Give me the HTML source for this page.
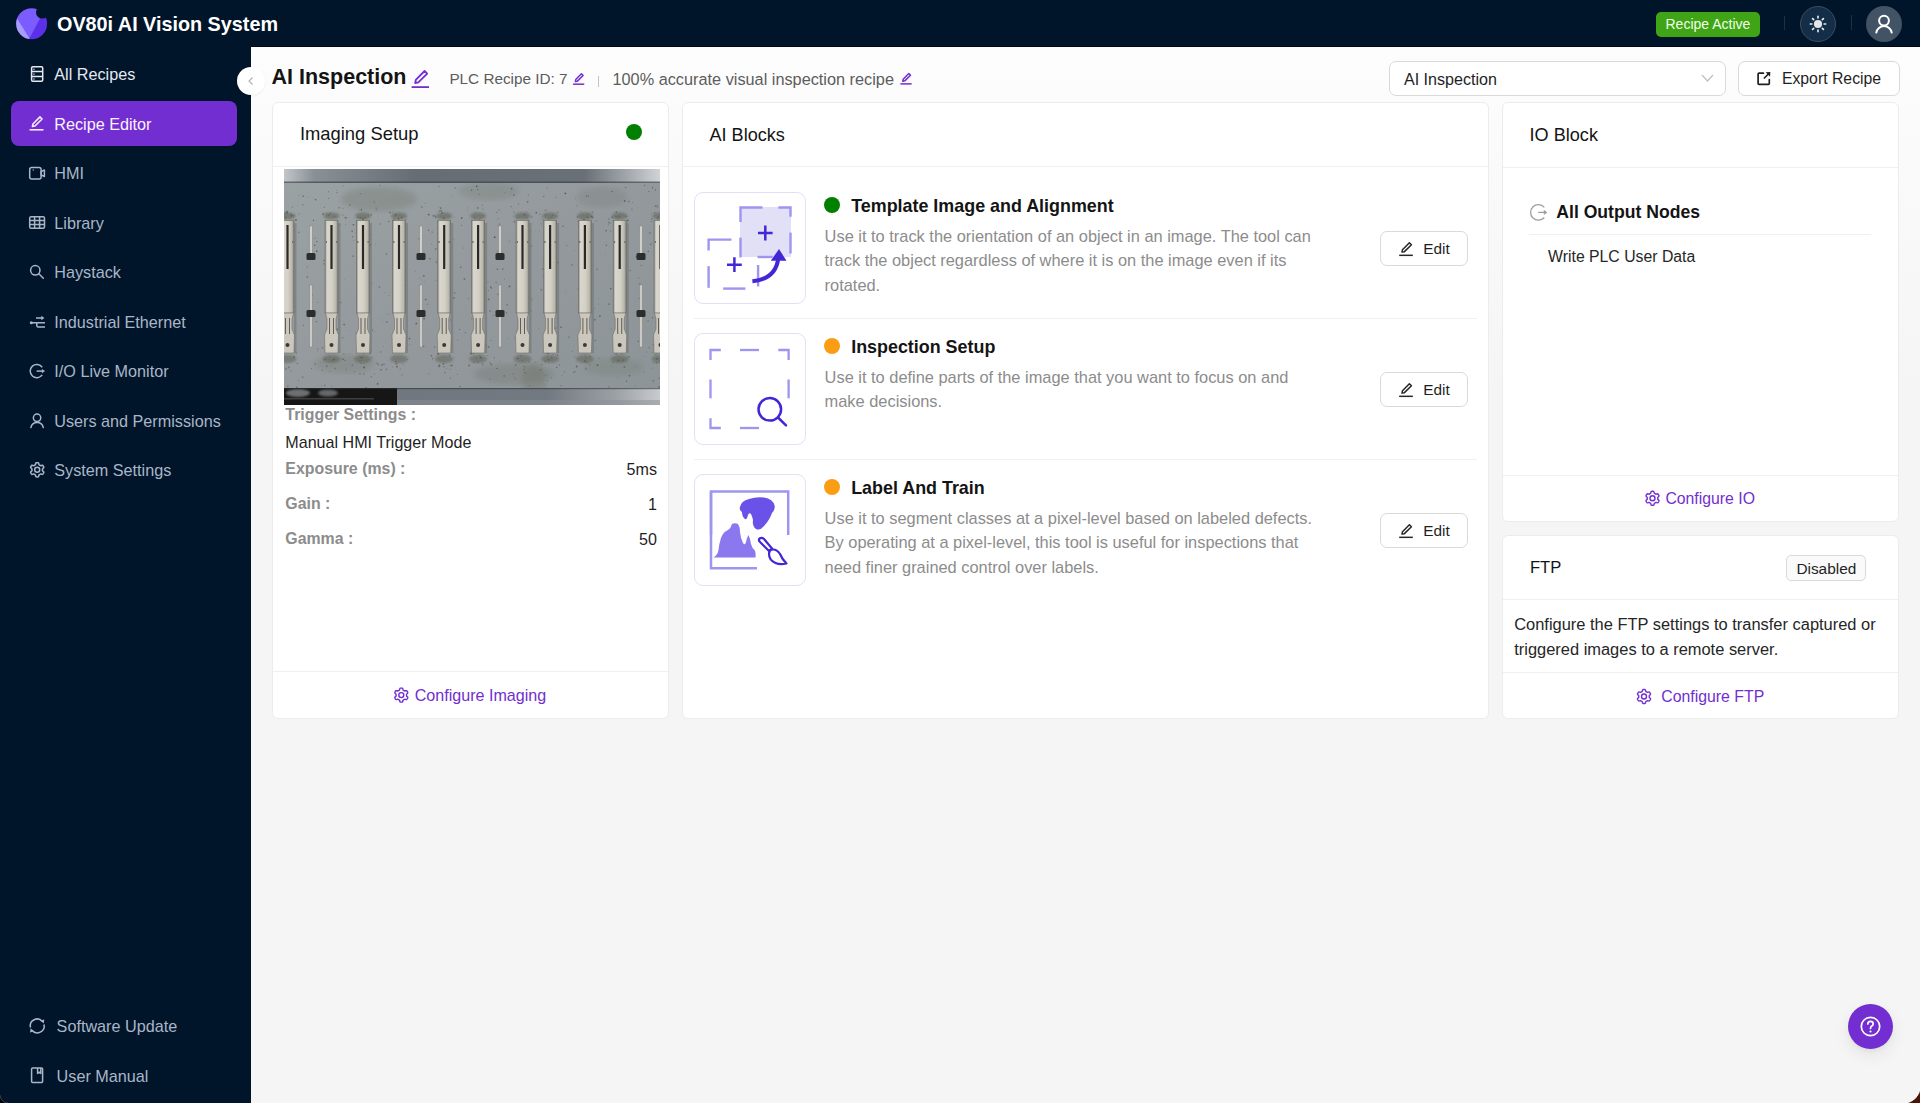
<!DOCTYPE html>
<html><head><meta charset="utf-8"><title>OV80i AI Vision System</title>
<style>
html,body{margin:0;padding:0;width:1920px;height:1103px;overflow:hidden;background:#f5f5f5;font-family:"Liberation Sans",sans-serif;}
.t{position:absolute;line-height:1;white-space:nowrap;}
svg{overflow:visible}
</style></head><body>
<div style="position:absolute;left:0px;top:0px;width:1920px;height:47px;background:#001529"></div>
<svg style="position:absolute;left:0;top:0" width="60" height="47" viewBox="0 0 60 47">
<defs><mask id="lm"><rect x="0" y="0" width="60" height="47" fill="#fff"/><circle cx="42.3" cy="12.3" r="6.3" fill="#000"/></mask>
<clipPath id="lc"><circle cx="31.6" cy="23.7" r="15.5"/></clipPath></defs>
<g clip-path="url(#lc)" mask="url(#lm)"><rect x="0" y="0" width="60" height="47" fill="#7a5cff"/>
<path d="M0 0 L5.7 0 L34.75 47 L0 47Z" fill="#a99cff"/>
<path d="M49.7 0 L60 0 L60 47 L25 47Z" fill="#5b30e8"/></g></svg>
<div class="t" style="left:57.0px;top:14.9px;font-size:19.8px;color:#ffffff;font-weight:700;">OV80i AI Vision System</div>
<div style="position:absolute;left:1656px;top:12px;width:104px;height:25px;background:#3fa516;border-radius:5px"></div>
<div class="t" style="left:1665.5px;top:17.4px;font-size:14px;color:#f0ffe8;font-weight:400;">Recipe Active</div>
<div style="position:absolute;left:1784px;top:16px;width:1px;height:14px;background:#1f3046"></div>
<div style="position:absolute;left:1851px;top:15px;width:1px;height:15px;background:#1f3046"></div>
<div style="position:absolute;left:1800px;top:6px;width:36px;height:36px;background:#142e48;border:1px solid #3e4d5e;border-radius:50%;box-sizing:border-box"></div>
<svg style="position:absolute;left:1807.7px;top:13.7px" width="20" height="20" viewBox="0 0 20 20">
<circle cx="10" cy="10" r="4.1" fill="#e4e6ea"/>
<g stroke="#e4eef5" stroke-width="1.6" stroke-linecap="round"><line x1="10.00" y1="3.90" x2="10.00" y2="2.30"/><line x1="14.31" y1="5.69" x2="15.44" y2="4.56"/><line x1="16.10" y1="10.00" x2="17.70" y2="10.00"/><line x1="14.31" y1="14.31" x2="15.44" y2="15.44"/><line x1="10.00" y1="16.10" x2="10.00" y2="17.70"/><line x1="5.69" y1="14.31" x2="4.56" y2="15.44"/><line x1="3.90" y1="10.00" x2="2.30" y2="10.00"/><line x1="5.69" y1="5.69" x2="4.56" y2="4.56"/></g></svg>
<div style="position:absolute;left:1866px;top:6px;width:36px;height:36px;background:#435366;border-radius:50%"></div>
<svg style="position:absolute;left:1872px;top:12px" width="24" height="24" viewBox="0 0 24 24">
<g fill="none" stroke="#ffffff" stroke-width="2" stroke-linecap="round">
<circle cx="12" cy="8.6" r="4.9"/><path d="M4.3 20.6 A7.8 7.8 0 0 1 19.7 20.6"/></g></svg>
<div style="position:absolute;left:0px;top:47px;width:251px;height:1056px;background:#001529"></div>
<div style="position:absolute;left:11px;top:101px;width:226px;height:45px;background:#722ed1;border-radius:8px"></div>
<div class="t" style="left:54.3px;top:66.3px;font-size:16.2px;color:#e4e9f2;font-weight:400;">All Recipes</div>
<div class="t" style="left:54.3px;top:115.8px;font-size:16.2px;color:#fbf3ff;font-weight:400;">Recipe Editor</div>
<div class="t" style="left:54.3px;top:165.3px;font-size:16.2px;color:#aab6c8;font-weight:400;">HMI</div>
<div class="t" style="left:54.3px;top:214.8px;font-size:16.2px;color:#aab6c8;font-weight:400;">Library</div>
<div class="t" style="left:54.3px;top:264.3px;font-size:16.2px;color:#aab6c8;font-weight:400;">Haystack</div>
<div class="t" style="left:54.3px;top:313.5px;font-size:16.2px;color:#aab6c8;font-weight:400;">Industrial Ethernet</div>
<div class="t" style="left:54.3px;top:363.0px;font-size:16.2px;color:#aab6c8;font-weight:400;">I/O Live Monitor</div>
<div class="t" style="left:54.3px;top:412.6px;font-size:16.2px;color:#aab6c8;font-weight:400;">Users and Permissions</div>
<div class="t" style="left:54.3px;top:462.0px;font-size:16.2px;color:#aab6c8;font-weight:400;">System Settings</div>
<div class="t" style="left:56.6px;top:1018.3px;font-size:16.2px;color:#aab6c8;font-weight:400;">Software Update</div>
<div class="t" style="left:56.6px;top:1067.9px;font-size:16.2px;color:#aab6c8;font-weight:400;">User Manual</div>
<div style="position:absolute;left:251px;top:47px;width:1669px;height:1056px;background:linear-gradient(#fdfdfd 0px,#fbfbfb 70px,#f5f5f5 340px,#f5f5f5 1056px)"></div>
<div style="position:absolute;left:251px;top:46px;width:1669px;height:1px;background:#000514"></div>
<div style="position:absolute;left:237px;top:67px;width:28px;height:28px;background:#ffffff;border-radius:50%;box-shadow:0 1px 3px rgba(0,0,0,0.06)"></div>
<svg style="position:absolute;left:246px;top:76px" width="10" height="10" viewBox="0 0 10 10"><path d="M6.5 1.5 L3 5 L6.5 8.5" fill="none" stroke="#b0b0b0" stroke-width="1.1"/></svg>
<div class="t" style="left:271.5px;top:66.5px;font-size:21.5px;color:#141414;font-weight:700;">AI Inspection</div>
<div class="t" style="left:449.4px;top:71.4px;font-size:15.3px;color:#5c5c5c;font-weight:400;">PLC Recipe ID: 7</div>
<div style="position:absolute;left:598px;top:76px;width:1.3px;height:11px;background:#c4c4c4"></div>
<div class="t" style="left:612.5px;top:70.6px;font-size:16.3px;color:#5c5c5c;font-weight:400;">100% accurate visual inspection recipe</div>
<div style="position:absolute;left:1389px;top:61px;width:337px;height:35px;background:#fff;border:1px solid #d9d9d9;border-radius:7px;box-sizing:border-box"></div>
<div class="t" style="left:1403.9px;top:70.9px;font-size:16.1px;color:#1f1f1f;font-weight:400;">AI Inspection</div>
<svg style="position:absolute;left:1701px;top:73px" width="13" height="10" viewBox="0 0 13 10"><path d="M1 2 L6.5 8 L12 2" fill="none" stroke="#bfbfbf" stroke-width="1.2"/></svg>
<div style="position:absolute;left:1738px;top:61px;width:162px;height:35px;background:#fff;border:1px solid #d9d9d9;border-radius:7px;box-sizing:border-box"></div>
<svg style="position:absolute;left:0;top:0" width="1920" height="120" viewBox="0 0 1920 120"><g fill="none" stroke="#1f1f1f" stroke-width="1.7" stroke-linecap="round"><path d="M1763.4 73.2 H1759 Q1758.1 73.2 1758.1 74.1 V83.4 Q1758.1 84.3 1759 84.3 H1768.4 Q1769.3 84.3 1769.3 83.4 V79.6"/><path d="M1764.4 78 L1768.4 74"/></g><path d="M1765.6 72.3 L1770.3 72.1 L1770.1 76.8 Z" fill="#1f1f1f"/></svg>
<div class="t" style="left:1781.9px;top:71.4px;font-size:15.8px;color:#1f1f1f;font-weight:400;">Export Recipe</div>
<div style="position:absolute;left:272px;top:102px;width:397px;height:617px;background:#fff;border:1px solid #ececec;border-radius:6px;box-sizing:border-box"></div>
<div class="t" style="left:299.9px;top:125.2px;font-size:18.4px;color:#141414;font-weight:400;">Imaging Setup</div>
<div style="position:absolute;left:626px;top:124px;width:16px;height:16px;background:#008000;border-radius:50%"></div>
<div style="position:absolute;left:273px;top:166px;width:395px;height:1px;background:#f0f0f0"></div>
<svg style="position:absolute;left:284px;top:169px;overflow:hidden" width="376" height="236" viewBox="0 0 376 236"><defs><linearGradient id="rail" x1="0" x2="1" y1="0" y2="0"><stop offset="0" stop-color="#c2c6ca"/><stop offset="0.08" stop-color="#8a9096"/><stop offset="0.35" stop-color="#676d74"/><stop offset="0.8" stop-color="#6a7077"/><stop offset="0.9" stop-color="#9ca1a6"/><stop offset="1" stop-color="#d0d3d6"/></linearGradient><linearGradient id="plate" x1="0" x2="1" y1="0" y2="1"><stop offset="0" stop-color="#9ba2a4"/><stop offset="0.5" stop-color="#93999c"/><stop offset="1" stop-color="#8d9497"/></linearGradient><linearGradient id="brail" x1="0" x2="1" y1="0" y2="0"><stop offset="0" stop-color="#70767d"/><stop offset="0.7" stop-color="#737980"/><stop offset="0.88" stop-color="#9ba0a5"/><stop offset="1" stop-color="#c8cbce"/></linearGradient><linearGradient id="term" x1="0" x2="1" y1="0" y2="0"><stop offset="0" stop-color="#85837b"/><stop offset="0.15" stop-color="#d9d6cd"/><stop offset="0.55" stop-color="#d3d0c6"/><stop offset="0.85" stop-color="#bab7ad"/><stop offset="1" stop-color="#7a786f"/></linearGradient><filter id="blur1"><feGaussianBlur stdDeviation="2.5"/></filter><filter id="blur2"><feGaussianBlur stdDeviation="1.2"/></filter></defs><rect x="0" y="0" width="376" height="236" fill="url(#plate)"/><ellipse cx="95" cy="30" rx="38" ry="12" fill="#5e6252" opacity="0.22" filter="url(#blur1)"/><ellipse cx="205" cy="22" rx="30" ry="9" fill="#5e6252" opacity="0.18" filter="url(#blur1)"/><ellipse cx="318" cy="28" rx="25" ry="10" fill="#5e6252" opacity="0.15" filter="url(#blur1)"/><ellipse cx="60" cy="195" rx="30" ry="9" fill="#5e6252" opacity="0.18" filter="url(#blur1)"/><ellipse cx="230" cy="205" rx="40" ry="10" fill="#5e6252" opacity="0.2" filter="url(#blur1)"/><ellipse cx="330" cy="198" rx="30" ry="9" fill="#5e6252" opacity="0.15" filter="url(#blur1)"/><ellipse cx="250" cy="212" rx="12" ry="18" fill="#5e6252" opacity="0.22" filter="url(#blur1)"/><circle cx="170.1" cy="128.8" r="0.86" fill="#3a3e38" opacity="0.49"/><circle cx="190.9" cy="134.4" r="0.45" fill="#3a3e38" opacity="0.50"/><circle cx="236.8" cy="176.6" r="0.40" fill="#3a3e38" opacity="0.42"/><circle cx="34.1" cy="180.0" r="0.73" fill="#3a3e38" opacity="0.32"/><circle cx="369.3" cy="211.8" r="0.71" fill="#3a3e38" opacity="0.55"/><circle cx="59.2" cy="17.1" r="0.64" fill="#3a3e38" opacity="0.32"/><circle cx="71.5" cy="63.6" r="0.37" fill="#3a3e38" opacity="0.49"/><circle cx="165.6" cy="186.7" r="0.64" fill="#3a3e38" opacity="0.56"/><circle cx="187.9" cy="149.8" r="0.60" fill="#3a3e38" opacity="0.41"/><circle cx="375.1" cy="218.1" r="0.81" fill="#3a3e38" opacity="0.58"/><circle cx="118.5" cy="61.1" r="0.51" fill="#3a3e38" opacity="0.33"/><circle cx="288.1" cy="96.1" r="0.82" fill="#3a3e38" opacity="0.45"/><circle cx="360.2" cy="187.7" r="0.35" fill="#3a3e38" opacity="0.38"/><circle cx="342.3" cy="110.3" r="0.89" fill="#3a3e38" opacity="0.46"/><circle cx="27.5" cy="143.0" r="0.78" fill="#3a3e38" opacity="0.41"/><circle cx="32.8" cy="82.2" r="0.88" fill="#3a3e38" opacity="0.60"/><circle cx="44.4" cy="64.5" r="0.41" fill="#3a3e38" opacity="0.32"/><circle cx="299.7" cy="50.4" r="0.66" fill="#3a3e38" opacity="0.48"/><circle cx="71.7" cy="164.0" r="0.42" fill="#3a3e38" opacity="0.56"/><circle cx="43.8" cy="100.3" r="0.47" fill="#3a3e38" opacity="0.41"/><circle cx="365.1" cy="178.7" r="0.52" fill="#3a3e38" opacity="0.65"/><circle cx="79.2" cy="94.8" r="0.82" fill="#3a3e38" opacity="0.56"/><circle cx="37.7" cy="216.8" r="0.47" fill="#3a3e38" opacity="0.40"/><circle cx="290.5" cy="81.4" r="0.51" fill="#3a3e38" opacity="0.33"/><circle cx="33.9" cy="133.5" r="0.48" fill="#3a3e38" opacity="0.54"/><circle cx="139.8" cy="106.9" r="0.88" fill="#3a3e38" opacity="0.49"/><circle cx="216.0" cy="191.6" r="0.45" fill="#3a3e38" opacity="0.36"/><circle cx="341.6" cy="181.6" r="0.49" fill="#3a3e38" opacity="0.38"/><circle cx="278.0" cy="206.8" r="0.46" fill="#3a3e38" opacity="0.68"/><circle cx="331.7" cy="137.7" r="0.58" fill="#3a3e38" opacity="0.34"/><circle cx="14.5" cy="211.3" r="0.48" fill="#3a3e38" opacity="0.58"/><circle cx="96.6" cy="182.9" r="0.68" fill="#3a3e38" opacity="0.42"/><circle cx="66.0" cy="161.7" r="0.39" fill="#3a3e38" opacity="0.39"/><circle cx="210.3" cy="188.7" r="0.69" fill="#3a3e38" opacity="0.41"/><circle cx="344.9" cy="55.8" r="0.36" fill="#3a3e38" opacity="0.41"/><circle cx="167.6" cy="26.4" r="0.45" fill="#3a3e38" opacity="0.45"/><circle cx="215.1" cy="41.0" r="0.55" fill="#3a3e38" opacity="0.66"/><circle cx="368.7" cy="148.7" r="0.73" fill="#3a3e38" opacity="0.53"/><circle cx="52.8" cy="21.2" r="0.36" fill="#3a3e38" opacity="0.66"/><circle cx="263.6" cy="211.4" r="0.36" fill="#3a3e38" opacity="0.55"/><circle cx="181.3" cy="163.8" r="0.53" fill="#3a3e38" opacity="0.70"/><circle cx="28.3" cy="125.9" r="0.76" fill="#3a3e38" opacity="0.66"/><circle cx="277.1" cy="158.3" r="0.79" fill="#3a3e38" opacity="0.67"/><circle cx="132.3" cy="154.5" r="0.85" fill="#3a3e38" opacity="0.65"/><circle cx="156.8" cy="176.1" r="0.82" fill="#3a3e38" opacity="0.53"/><circle cx="235.0" cy="92.4" r="0.67" fill="#3a3e38" opacity="0.54"/><circle cx="30.2" cy="145.1" r="0.90" fill="#3a3e38" opacity="0.65"/><circle cx="273.8" cy="93.6" r="0.75" fill="#3a3e38" opacity="0.53"/><circle cx="165.6" cy="185.9" r="0.40" fill="#3a3e38" opacity="0.60"/><circle cx="11.2" cy="137.3" r="0.61" fill="#3a3e38" opacity="0.39"/><circle cx="262.6" cy="115.9" r="0.69" fill="#3a3e38" opacity="0.67"/><circle cx="96.2" cy="16.3" r="0.52" fill="#3a3e38" opacity="0.57"/><circle cx="76.2" cy="48.8" r="0.85" fill="#3a3e38" opacity="0.56"/><circle cx="166.2" cy="196.8" r="0.53" fill="#3a3e38" opacity="0.57"/><circle cx="74.6" cy="102.3" r="0.79" fill="#3a3e38" opacity="0.67"/><circle cx="331.0" cy="92.8" r="0.67" fill="#3a3e38" opacity="0.43"/><circle cx="51.2" cy="115.8" r="0.81" fill="#3a3e38" opacity="0.64"/><circle cx="267.4" cy="208.8" r="0.50" fill="#3a3e38" opacity="0.37"/><circle cx="169.4" cy="70.4" r="0.47" fill="#3a3e38" opacity="0.47"/><circle cx="235.3" cy="115.2" r="0.52" fill="#3a3e38" opacity="0.64"/><circle cx="369.2" cy="106.8" r="0.39" fill="#3a3e38" opacity="0.31"/><circle cx="328.2" cy="22.5" r="0.74" fill="#3a3e38" opacity="0.53"/><circle cx="116.2" cy="176.3" r="0.36" fill="#3a3e38" opacity="0.35"/><circle cx="171.0" cy="19.1" r="0.81" fill="#3a3e38" opacity="0.39"/><circle cx="53.0" cy="23.6" r="0.70" fill="#3a3e38" opacity="0.48"/><circle cx="236.9" cy="148.3" r="0.79" fill="#3a3e38" opacity="0.68"/><circle cx="257.4" cy="54.9" r="0.61" fill="#3a3e38" opacity="0.37"/><circle cx="4.0" cy="110.8" r="0.74" fill="#3a3e38" opacity="0.37"/><circle cx="102.4" cy="84.9" r="0.73" fill="#3a3e38" opacity="0.51"/><circle cx="231.0" cy="169.0" r="0.57" fill="#3a3e38" opacity="0.62"/><circle cx="340.7" cy="31.9" r="0.86" fill="#3a3e38" opacity="0.59"/><circle cx="48.8" cy="107.0" r="0.69" fill="#3a3e38" opacity="0.66"/><circle cx="141.7" cy="130.6" r="0.83" fill="#3a3e38" opacity="0.62"/><circle cx="355.0" cy="109.1" r="0.71" fill="#3a3e38" opacity="0.38"/><circle cx="271.4" cy="181.8" r="0.70" fill="#3a3e38" opacity="0.59"/><circle cx="80.2" cy="198.5" r="0.89" fill="#3a3e38" opacity="0.69"/><circle cx="201.9" cy="176.1" r="0.53" fill="#3a3e38" opacity="0.66"/><circle cx="321.8" cy="85.4" r="0.40" fill="#3a3e38" opacity="0.48"/><circle cx="206.9" cy="171.5" r="0.62" fill="#3a3e38" opacity="0.31"/><circle cx="304.2" cy="27.1" r="0.79" fill="#3a3e38" opacity="0.37"/><circle cx="126.0" cy="175.5" r="0.43" fill="#3a3e38" opacity="0.36"/><circle cx="194.2" cy="162.3" r="0.81" fill="#3a3e38" opacity="0.58"/><circle cx="355.6" cy="115.0" r="0.87" fill="#3a3e38" opacity="0.33"/><circle cx="83.3" cy="122.0" r="0.51" fill="#3a3e38" opacity="0.59"/><circle cx="240.2" cy="121.2" r="0.81" fill="#3a3e38" opacity="0.52"/><circle cx="117.2" cy="92.1" r="0.81" fill="#3a3e38" opacity="0.66"/><circle cx="78.3" cy="188.4" r="0.88" fill="#3a3e38" opacity="0.51"/><circle cx="215.4" cy="55.2" r="0.64" fill="#3a3e38" opacity="0.50"/><circle cx="227.6" cy="19.7" r="0.88" fill="#3a3e38" opacity="0.51"/><circle cx="150.6" cy="178.2" r="0.66" fill="#3a3e38" opacity="0.50"/><circle cx="259.8" cy="27.5" r="0.65" fill="#3a3e38" opacity="0.47"/><circle cx="359.8" cy="203.3" r="0.50" fill="#3a3e38" opacity="0.49"/><circle cx="47.7" cy="102.9" r="0.80" fill="#3a3e38" opacity="0.66"/><circle cx="179.2" cy="79.0" r="0.46" fill="#3a3e38" opacity="0.55"/><circle cx="347.9" cy="40.5" r="0.78" fill="#3a3e38" opacity="0.31"/><circle cx="73.0" cy="60.6" r="0.73" fill="#3a3e38" opacity="0.43"/><circle cx="133.6" cy="141.1" r="0.41" fill="#3a3e38" opacity="0.59"/><circle cx="46.2" cy="118.6" r="0.49" fill="#3a3e38" opacity="0.38"/><circle cx="199.4" cy="103.5" r="0.56" fill="#3a3e38" opacity="0.47"/><circle cx="199.0" cy="46.7" r="0.46" fill="#3a3e38" opacity="0.55"/><circle cx="240.1" cy="122.6" r="0.82" fill="#3a3e38" opacity="0.54"/><circle cx="322.1" cy="61.7" r="0.76" fill="#3a3e38" opacity="0.62"/><circle cx="339.4" cy="78.8" r="0.52" fill="#3a3e38" opacity="0.67"/><circle cx="82.0" cy="218.7" r="0.84" fill="#3a3e38" opacity="0.35"/><circle cx="90.0" cy="162.9" r="0.49" fill="#3a3e38" opacity="0.34"/><circle cx="312.9" cy="100.4" r="0.78" fill="#3a3e38" opacity="0.35"/><circle cx="151.4" cy="154.5" r="0.36" fill="#3a3e38" opacity="0.38"/><circle cx="256.6" cy="200.8" r="0.88" fill="#3a3e38" opacity="0.35"/><circle cx="190.1" cy="169.4" r="0.63" fill="#3a3e38" opacity="0.57"/><circle cx="71.1" cy="28.5" r="0.41" fill="#3a3e38" opacity="0.31"/><circle cx="207.4" cy="119.5" r="0.66" fill="#3a3e38" opacity="0.36"/><circle cx="69.4" cy="55.8" r="0.81" fill="#3a3e38" opacity="0.70"/><circle cx="348.5" cy="33.5" r="0.38" fill="#3a3e38" opacity="0.68"/><circle cx="173.7" cy="170.8" r="0.53" fill="#3a3e38" opacity="0.49"/><circle cx="193.7" cy="102.2" r="0.68" fill="#3a3e38" opacity="0.31"/><circle cx="263.6" cy="187.1" r="0.45" fill="#3a3e38" opacity="0.48"/><circle cx="278.0" cy="97.1" r="0.46" fill="#3a3e38" opacity="0.37"/><circle cx="192.7" cy="17.2" r="0.84" fill="#3a3e38" opacity="0.62"/><circle cx="265.0" cy="190.5" r="0.70" fill="#3a3e38" opacity="0.46"/><circle cx="225.5" cy="117.4" r="0.89" fill="#3a3e38" opacity="0.62"/><circle cx="97.1" cy="200.8" r="0.76" fill="#3a3e38" opacity="0.61"/><circle cx="306.3" cy="97.2" r="0.84" fill="#3a3e38" opacity="0.65"/><circle cx="261.2" cy="171.3" r="0.77" fill="#3a3e38" opacity="0.46"/><circle cx="271.7" cy="28.5" r="0.54" fill="#3a3e38" opacity="0.49"/><circle cx="4.0" cy="86.9" r="0.70" fill="#3a3e38" opacity="0.55"/><circle cx="87.3" cy="207.7" r="0.72" fill="#3a3e38" opacity="0.44"/><circle cx="248.1" cy="130.8" r="0.64" fill="#3a3e38" opacity="0.46"/><circle cx="376.0" cy="145.7" r="0.74" fill="#3a3e38" opacity="0.60"/><circle cx="368.5" cy="18.7" r="0.69" fill="#3a3e38" opacity="0.60"/><circle cx="96.5" cy="96.3" r="0.38" fill="#3a3e38" opacity="0.38"/><circle cx="141.3" cy="34.2" r="0.49" fill="#3a3e38" opacity="0.66"/><circle cx="206.8" cy="118.1" r="0.88" fill="#3a3e38" opacity="0.53"/><circle cx="374.2" cy="144.8" r="0.80" fill="#3a3e38" opacity="0.33"/><circle cx="224.7" cy="169.6" r="0.37" fill="#3a3e38" opacity="0.67"/><circle cx="60.1" cy="110.7" r="0.44" fill="#3a3e38" opacity="0.50"/><circle cx="229.8" cy="26.0" r="0.87" fill="#3a3e38" opacity="0.47"/><circle cx="198.1" cy="136.6" r="0.55" fill="#3a3e38" opacity="0.41"/><circle cx="246.3" cy="128.9" r="0.51" fill="#3a3e38" opacity="0.59"/><circle cx="111.3" cy="16.9" r="0.48" fill="#3a3e38" opacity="0.32"/><circle cx="58.9" cy="168.7" r="0.56" fill="#3a3e38" opacity="0.66"/><circle cx="281.4" cy="24.3" r="0.89" fill="#3a3e38" opacity="0.68"/><circle cx="27.6" cy="199.6" r="0.59" fill="#3a3e38" opacity="0.49"/><circle cx="365.9" cy="64.0" r="0.64" fill="#3a3e38" opacity="0.67"/><circle cx="271.7" cy="110.0" r="0.89" fill="#3a3e38" opacity="0.63"/><circle cx="227.0" cy="37.6" r="0.69" fill="#3a3e38" opacity="0.48"/><circle cx="76.6" cy="24.7" r="0.64" fill="#3a3e38" opacity="0.35"/><circle cx="166.5" cy="150.9" r="0.60" fill="#3a3e38" opacity="0.40"/><circle cx="218.9" cy="100.0" r="0.78" fill="#3a3e38" opacity="0.51"/><circle cx="375.1" cy="209.3" r="0.75" fill="#3a3e38" opacity="0.40"/><circle cx="42.8" cy="197.0" r="0.78" fill="#3a3e38" opacity="0.55"/><circle cx="135.1" cy="69.7" r="0.73" fill="#3a3e38" opacity="0.53"/><circle cx="222.5" cy="143.8" r="0.76" fill="#3a3e38" opacity="0.38"/><circle cx="93.6" cy="214.8" r="0.85" fill="#3a3e38" opacity="0.65"/><circle cx="14.9" cy="26.5" r="0.50" fill="#3a3e38" opacity="0.47"/><circle cx="234.4" cy="35.0" r="0.65" fill="#3a3e38" opacity="0.33"/><circle cx="32.5" cy="152.6" r="0.65" fill="#3a3e38" opacity="0.55"/><circle cx="140.3" cy="112.1" r="0.47" fill="#3a3e38" opacity="0.44"/><circle cx="280.1" cy="185.9" r="0.39" fill="#3a3e38" opacity="0.35"/><circle cx="304.3" cy="141.9" r="0.77" fill="#3a3e38" opacity="0.39"/><circle cx="159.6" cy="66.9" r="0.80" fill="#3a3e38" opacity="0.45"/><circle cx="245.8" cy="216.8" r="0.53" fill="#3a3e38" opacity="0.52"/><circle cx="280.5" cy="202.8" r="0.59" fill="#3a3e38" opacity="0.45"/><circle cx="36.5" cy="193.4" r="0.39" fill="#3a3e38" opacity="0.33"/><circle cx="212.1" cy="113.4" r="0.73" fill="#3a3e38" opacity="0.42"/><circle cx="291.6" cy="29.6" r="0.47" fill="#3a3e38" opacity="0.56"/><circle cx="30.7" cy="76.3" r="0.75" fill="#3a3e38" opacity="0.58"/><circle cx="106.4" cy="43.3" r="0.55" fill="#3a3e38" opacity="0.59"/><circle cx="137.8" cy="38.1" r="0.74" fill="#3a3e38" opacity="0.53"/><circle cx="345.4" cy="206.7" r="0.85" fill="#3a3e38" opacity="0.48"/><circle cx="301.9" cy="76.5" r="0.52" fill="#3a3e38" opacity="0.46"/><circle cx="351.4" cy="197.4" r="0.49" fill="#3a3e38" opacity="0.44"/><circle cx="137.5" cy="88.5" r="0.57" fill="#3a3e38" opacity="0.46"/><circle cx="73.3" cy="129.6" r="0.79" fill="#3a3e38" opacity="0.52"/><circle cx="314.5" cy="129.4" r="0.45" fill="#3a3e38" opacity="0.60"/><circle cx="331.2" cy="71.7" r="0.36" fill="#3a3e38" opacity="0.51"/><circle cx="204.6" cy="130.3" r="0.88" fill="#3a3e38" opacity="0.56"/><circle cx="302.4" cy="27.1" r="0.65" fill="#3a3e38" opacity="0.62"/><circle cx="31.6" cy="30.7" r="0.76" fill="#3a3e38" opacity="0.66"/><circle cx="31.8" cy="144.0" r="0.43" fill="#3a3e38" opacity="0.60"/><circle cx="244.0" cy="64.3" r="0.47" fill="#3a3e38" opacity="0.61"/><circle cx="196.1" cy="170.8" r="0.57" fill="#3a3e38" opacity="0.44"/><circle cx="364.1" cy="151.8" r="0.62" fill="#3a3e38" opacity="0.51"/><circle cx="271.1" cy="159.2" r="0.85" fill="#3a3e38" opacity="0.46"/><circle cx="310.7" cy="150.7" r="0.82" fill="#3a3e38" opacity="0.62"/><circle cx="313.5" cy="196.2" r="0.88" fill="#3a3e38" opacity="0.56"/><circle cx="197.0" cy="159.6" r="0.79" fill="#3a3e38" opacity="0.47"/><circle cx="158.1" cy="44.0" r="0.76" fill="#3a3e38" opacity="0.70"/><circle cx="141.2" cy="48.4" r="0.46" fill="#3a3e38" opacity="0.47"/><circle cx="109.8" cy="212.8" r="0.38" fill="#3a3e38" opacity="0.42"/><circle cx="43.2" cy="146.8" r="0.78" fill="#3a3e38" opacity="0.37"/><circle cx="23.4" cy="108.0" r="0.67" fill="#3a3e38" opacity="0.66"/><circle cx="13.7" cy="36.3" r="0.45" fill="#3a3e38" opacity="0.39"/><circle cx="88.5" cy="161.0" r="0.68" fill="#3a3e38" opacity="0.39"/><circle cx="69.6" cy="71.6" r="0.44" fill="#3a3e38" opacity="0.60"/><circle cx="117.2" cy="126.4" r="0.80" fill="#3a3e38" opacity="0.49"/><circle cx="97.9" cy="195.9" r="0.85" fill="#3a3e38" opacity="0.44"/><circle cx="205.8" cy="210.2" r="0.62" fill="#3a3e38" opacity="0.39"/><circle cx="18.7" cy="208.2" r="0.79" fill="#3a3e38" opacity="0.45"/><circle cx="198.4" cy="119.7" r="0.50" fill="#3a3e38" opacity="0.70"/><circle cx="247.2" cy="62.7" r="0.36" fill="#3a3e38" opacity="0.49"/><circle cx="139.7" cy="177.3" r="0.74" fill="#3a3e38" opacity="0.54"/><circle cx="59.1" cy="46.2" r="0.53" fill="#3a3e38" opacity="0.40"/><circle cx="326.8" cy="119.8" r="0.70" fill="#3a3e38" opacity="0.70"/><circle cx="100.2" cy="123.6" r="0.43" fill="#3a3e38" opacity="0.61"/><circle cx="0.5" cy="182.4" r="0.82" fill="#3a3e38" opacity="0.63"/><circle cx="31.0" cy="69.3" r="0.74" fill="#3a3e38" opacity="0.34"/><circle cx="180.5" cy="110.1" r="0.88" fill="#3a3e38" opacity="0.53"/><circle cx="322.4" cy="76.2" r="0.78" fill="#3a3e38" opacity="0.47"/><circle cx="344.7" cy="32.6" r="0.80" fill="#3a3e38" opacity="0.38"/><circle cx="204.3" cy="121.8" r="0.44" fill="#3a3e38" opacity="0.63"/><circle cx="117.1" cy="77.7" r="0.39" fill="#3a3e38" opacity="0.42"/><circle cx="175.7" cy="160.6" r="0.55" fill="#3a3e38" opacity="0.57"/><circle cx="39.8" cy="94.8" r="0.60" fill="#3a3e38" opacity="0.69"/><circle cx="312.0" cy="148.1" r="0.36" fill="#3a3e38" opacity="0.45"/><circle cx="267.0" cy="62.7" r="0.66" fill="#3a3e38" opacity="0.48"/><circle cx="3.9" cy="217.3" r="0.79" fill="#3a3e38" opacity="0.38"/><circle cx="231.6" cy="73.5" r="0.56" fill="#3a3e38" opacity="0.52"/><circle cx="112.1" cy="83.2" r="0.57" fill="#3a3e38" opacity="0.57"/><circle cx="96.4" cy="55.0" r="0.75" fill="#3a3e38" opacity="0.43"/><circle cx="355.3" cy="129.4" r="0.75" fill="#3a3e38" opacity="0.43"/><circle cx="310.9" cy="32.9" r="0.43" fill="#3a3e38" opacity="0.34"/><circle cx="254.8" cy="159.2" r="0.45" fill="#3a3e38" opacity="0.46"/><circle cx="314.7" cy="135.5" r="0.40" fill="#3a3e38" opacity="0.39"/><circle cx="59.1" cy="39.4" r="0.57" fill="#3a3e38" opacity="0.33"/><circle cx="346.2" cy="101.5" r="0.63" fill="#3a3e38" opacity="0.56"/><circle cx="288.3" cy="182.3" r="0.56" fill="#3a3e38" opacity="0.43"/><circle cx="155.0" cy="17.2" r="0.57" fill="#3a3e38" opacity="0.58"/><circle cx="369.2" cy="175.9" r="0.71" fill="#3a3e38" opacity="0.54"/><circle cx="7.0" cy="81.9" r="0.54" fill="#3a3e38" opacity="0.56"/><circle cx="40.0" cy="91.4" r="0.63" fill="#3a3e38" opacity="0.62"/><circle cx="310.3" cy="139.3" r="0.44" fill="#3a3e38" opacity="0.61"/><circle cx="339.5" cy="126.4" r="0.54" fill="#3a3e38" opacity="0.50"/><circle cx="53.3" cy="160.3" r="0.89" fill="#3a3e38" opacity="0.51"/><circle cx="269.0" cy="185.3" r="0.46" fill="#3a3e38" opacity="0.68"/><circle cx="235.8" cy="54.6" r="0.40" fill="#3a3e38" opacity="0.40"/><circle cx="216.8" cy="156.9" r="0.53" fill="#3a3e38" opacity="0.67"/><circle cx="135.8" cy="108.9" r="0.42" fill="#3a3e38" opacity="0.69"/><circle cx="51.0" cy="199.3" r="0.65" fill="#3a3e38" opacity="0.52"/><circle cx="210.7" cy="68.2" r="0.85" fill="#3a3e38" opacity="0.70"/><circle cx="307.4" cy="137.3" r="0.42" fill="#3a3e38" opacity="0.63"/><circle cx="108.5" cy="197.9" r="0.48" fill="#3a3e38" opacity="0.53"/><circle cx="312.4" cy="52.0" r="0.65" fill="#3a3e38" opacity="0.33"/><circle cx="12.0" cy="50.9" r="0.89" fill="#3a3e38" opacity="0.68"/><circle cx="247.5" cy="77.1" r="0.72" fill="#3a3e38" opacity="0.60"/><circle cx="143.5" cy="135.3" r="0.79" fill="#3a3e38" opacity="0.31"/><circle cx="75.0" cy="109.9" r="0.43" fill="#3a3e38" opacity="0.45"/><circle cx="214.1" cy="49.6" r="0.64" fill="#3a3e38" opacity="0.41"/><circle cx="213.6" cy="82.1" r="0.70" fill="#3a3e38" opacity="0.32"/><circle cx="252.3" cy="43.7" r="0.88" fill="#3a3e38" opacity="0.54"/><circle cx="176.7" cy="98.3" r="0.69" fill="#3a3e38" opacity="0.58"/><circle cx="285.0" cy="168.1" r="0.62" fill="#3a3e38" opacity="0.70"/><circle cx="315.2" cy="189.3" r="0.57" fill="#3a3e38" opacity="0.47"/><circle cx="212.8" cy="199.6" r="0.64" fill="#3a3e38" opacity="0.51"/><circle cx="162.5" cy="199.4" r="0.53" fill="#3a3e38" opacity="0.32"/><circle cx="272.8" cy="198.5" r="0.75" fill="#3a3e38" opacity="0.54"/><circle cx="282.7" cy="76.5" r="0.68" fill="#3a3e38" opacity="0.33"/><circle cx="46.8" cy="105.6" r="0.63" fill="#3a3e38" opacity="0.46"/><circle cx="19.5" cy="156.5" r="0.64" fill="#3a3e38" opacity="0.40"/><circle cx="115.2" cy="95.1" r="0.48" fill="#3a3e38" opacity="0.33"/><circle cx="342.6" cy="212.1" r="0.72" fill="#3a3e38" opacity="0.65"/><circle cx="158.4" cy="179.1" r="0.47" fill="#3a3e38" opacity="0.60"/><circle cx="213.1" cy="199.2" r="0.40" fill="#3a3e38" opacity="0.62"/><circle cx="46.5" cy="124.2" r="0.87" fill="#3a3e38" opacity="0.30"/><circle cx="91.7" cy="75.3" r="0.53" fill="#3a3e38" opacity="0.33"/><circle cx="336.6" cy="181.2" r="0.57" fill="#3a3e38" opacity="0.44"/><circle cx="220.2" cy="23.4" r="0.37" fill="#3a3e38" opacity="0.66"/><circle cx="115.8" cy="116.2" r="0.86" fill="#3a3e38" opacity="0.69"/><circle cx="177.7" cy="56.3" r="0.51" fill="#3a3e38" opacity="0.67"/><circle cx="337.2" cy="54.1" r="0.81" fill="#3a3e38" opacity="0.44"/><circle cx="177.7" cy="49.2" r="0.83" fill="#3a3e38" opacity="0.70"/><circle cx="76.0" cy="143.6" r="0.46" fill="#3a3e38" opacity="0.65"/><circle cx="18.8" cy="35.8" r="0.75" fill="#3a3e38" opacity="0.43"/><circle cx="338.5" cy="192.3" r="0.74" fill="#3a3e38" opacity="0.35"/><circle cx="261.7" cy="206.3" r="0.59" fill="#3a3e38" opacity="0.33"/><circle cx="83.9" cy="77.0" r="0.74" fill="#3a3e38" opacity="0.38"/><circle cx="68.1" cy="62.3" r="0.72" fill="#3a3e38" opacity="0.62"/><circle cx="140.1" cy="149.7" r="0.84" fill="#3a3e38" opacity="0.54"/><circle cx="86.1" cy="75.7" r="0.86" fill="#3a3e38" opacity="0.57"/><circle cx="104.1" cy="145.2" r="0.40" fill="#3a3e38" opacity="0.69"/><circle cx="165.6" cy="122.3" r="0.64" fill="#3a3e38" opacity="0.32"/><circle cx="225.5" cy="72.3" r="0.49" fill="#3a3e38" opacity="0.62"/><circle cx="32.8" cy="72.5" r="0.77" fill="#3a3e38" opacity="0.40"/><circle cx="104.9" cy="126.4" r="0.45" fill="#3a3e38" opacity="0.66"/><circle cx="371.4" cy="20.9" r="0.60" fill="#3a3e38" opacity="0.60"/><circle cx="144.7" cy="204.5" r="0.62" fill="#3a3e38" opacity="0.37"/><circle cx="209.1" cy="146.2" r="0.55" fill="#3a3e38" opacity="0.56"/><circle cx="294.4" cy="119.9" r="0.63" fill="#3a3e38" opacity="0.64"/><circle cx="257.3" cy="120.7" r="0.87" fill="#3a3e38" opacity="0.37"/><circle cx="293.1" cy="47.9" r="0.68" fill="#3a3e38" opacity="0.39"/><circle cx="165.6" cy="172.5" r="0.78" fill="#3a3e38" opacity="0.62"/><circle cx="88.7" cy="114.3" r="0.47" fill="#3a3e38" opacity="0.53"/><circle cx="187.6" cy="21.2" r="0.68" fill="#3a3e38" opacity="0.59"/><circle cx="215.3" cy="192.9" r="0.45" fill="#3a3e38" opacity="0.36"/><circle cx="6.7" cy="115.7" r="0.59" fill="#3a3e38" opacity="0.48"/><circle cx="98.9" cy="177.7" r="0.39" fill="#3a3e38" opacity="0.66"/><circle cx="213.9" cy="125.4" r="0.79" fill="#3a3e38" opacity="0.40"/><circle cx="55.0" cy="77.8" r="0.37" fill="#3a3e38" opacity="0.43"/><circle cx="233.6" cy="121.7" r="0.50" fill="#3a3e38" opacity="0.54"/><circle cx="33.3" cy="182.2" r="0.44" fill="#3a3e38" opacity="0.40"/><circle cx="60.1" cy="155.6" r="0.81" fill="#3a3e38" opacity="0.61"/><circle cx="23.0" cy="98.2" r="0.55" fill="#3a3e38" opacity="0.39"/><circle cx="364.9" cy="22.6" r="0.62" fill="#3a3e38" opacity="0.60"/><circle cx="370.8" cy="43.6" r="0.60" fill="#3a3e38" opacity="0.60"/><circle cx="14.7" cy="63.3" r="0.84" fill="#3a3e38" opacity="0.36"/><circle cx="147.7" cy="75.1" r="0.58" fill="#3a3e38" opacity="0.33"/><circle cx="12.9" cy="218.2" r="0.77" fill="#3a3e38" opacity="0.59"/><circle cx="86.4" cy="65.9" r="0.65" fill="#3a3e38" opacity="0.40"/><circle cx="173.5" cy="205.2" r="0.55" fill="#3a3e38" opacity="0.43"/><circle cx="368.9" cy="139.2" r="0.37" fill="#3a3e38" opacity="0.46"/><circle cx="244.3" cy="26.0" r="0.54" fill="#3a3e38" opacity="0.58"/><circle cx="325.0" cy="135.1" r="0.84" fill="#3a3e38" opacity="0.49"/><circle cx="147.7" cy="186.8" r="0.56" fill="#3a3e38" opacity="0.61"/><circle cx="81.0" cy="85.2" r="0.45" fill="#3a3e38" opacity="0.52"/><circle cx="61.6" cy="55.7" r="0.47" fill="#3a3e38" opacity="0.49"/><circle cx="116.0" cy="105.7" r="0.90" fill="#3a3e38" opacity="0.57"/><circle cx="324.4" cy="55.9" r="0.56" fill="#3a3e38" opacity="0.33"/><circle cx="259.9" cy="88.4" r="0.50" fill="#3a3e38" opacity="0.31"/><circle cx="68.5" cy="67.8" r="0.57" fill="#3a3e38" opacity="0.67"/><circle cx="268.9" cy="69.1" r="0.55" fill="#3a3e38" opacity="0.36"/><circle cx="352.2" cy="87.7" r="0.77" fill="#3a3e38" opacity="0.59"/><circle cx="341.1" cy="18.2" r="0.53" fill="#3a3e38" opacity="0.45"/><circle cx="31.3" cy="194.9" r="0.53" fill="#3a3e38" opacity="0.61"/><circle cx="195.3" cy="25.3" r="0.57" fill="#3a3e38" opacity="0.40"/><circle cx="15.3" cy="44.9" r="0.68" fill="#3a3e38" opacity="0.31"/><circle cx="117.4" cy="100.9" r="0.65" fill="#3a3e38" opacity="0.35"/><circle cx="265.7" cy="67.4" r="0.75" fill="#3a3e38" opacity="0.57"/><circle cx="55.3" cy="56.0" r="0.50" fill="#3a3e38" opacity="0.59"/><circle cx="152.4" cy="93.2" r="0.83" fill="#3a3e38" opacity="0.39"/><circle cx="109.8" cy="84.7" r="0.47" fill="#3a3e38" opacity="0.32"/><circle cx="9.2" cy="143.2" r="0.66" fill="#3a3e38" opacity="0.62"/><circle cx="366.8" cy="75.1" r="0.72" fill="#3a3e38" opacity="0.67"/><circle cx="81.3" cy="155.3" r="0.72" fill="#3a3e38" opacity="0.68"/><circle cx="326.5" cy="62.1" r="0.70" fill="#3a3e38" opacity="0.34"/><circle cx="160.8" cy="94.5" r="0.38" fill="#3a3e38" opacity="0.45"/><circle cx="123.4" cy="115.9" r="0.50" fill="#3a3e38" opacity="0.36"/><circle cx="151.3" cy="111.4" r="0.44" fill="#3a3e38" opacity="0.57"/><circle cx="90.2" cy="33.1" r="0.54" fill="#3a3e38" opacity="0.47"/><circle cx="56.7" cy="133.4" r="0.74" fill="#3a3e38" opacity="0.52"/><circle cx="263.3" cy="18.7" r="0.57" fill="#3a3e38" opacity="0.45"/><circle cx="23.7" cy="96.9" r="0.38" fill="#3a3e38" opacity="0.50"/><circle cx="220.3" cy="110.1" r="0.53" fill="#3a3e38" opacity="0.40"/><circle cx="8.8" cy="85.2" r="0.84" fill="#3a3e38" opacity="0.53"/><circle cx="98.5" cy="151.0" r="0.45" fill="#3a3e38" opacity="0.49"/><circle cx="231.3" cy="209.7" r="0.55" fill="#3a3e38" opacity="0.53"/><circle cx="354.3" cy="172.2" r="0.70" fill="#3a3e38" opacity="0.55"/><circle cx="154.5" cy="99.2" r="0.50" fill="#3a3e38" opacity="0.63"/><circle cx="330.8" cy="92.3" r="0.85" fill="#3a3e38" opacity="0.32"/><circle cx="51.1" cy="118.0" r="0.52" fill="#3a3e38" opacity="0.44"/><circle cx="367.3" cy="44.7" r="0.46" fill="#3a3e38" opacity="0.39"/><circle cx="255.7" cy="62.1" r="0.35" fill="#3a3e38" opacity="0.52"/><circle cx="148.1" cy="63.1" r="0.62" fill="#3a3e38" opacity="0.56"/><circle cx="206.1" cy="142.0" r="0.66" fill="#3a3e38" opacity="0.63"/><circle cx="364.3" cy="82.4" r="0.54" fill="#3a3e38" opacity="0.65"/><circle cx="117.8" cy="160.8" r="0.73" fill="#3a3e38" opacity="0.57"/><circle cx="362.4" cy="183.0" r="0.44" fill="#3a3e38" opacity="0.55"/><circle cx="184.5" cy="129.6" r="0.55" fill="#3a3e38" opacity="0.41"/><circle cx="281.6" cy="123.5" r="0.48" fill="#3a3e38" opacity="0.40"/><circle cx="122.2" cy="50.4" r="0.63" fill="#3a3e38" opacity="0.35"/><circle cx="23.8" cy="28.1" r="0.41" fill="#3a3e38" opacity="0.58"/><circle cx="42.4" cy="106.6" r="0.77" fill="#3a3e38" opacity="0.49"/><circle cx="61.1" cy="191.6" r="0.83" fill="#3a3e38" opacity="0.32"/><circle cx="95.5" cy="118.0" r="0.79" fill="#3a3e38" opacity="0.46"/><circle cx="269.2" cy="65.6" r="0.74" fill="#3a3e38" opacity="0.43"/><circle cx="125.5" cy="169.6" r="0.81" fill="#3a3e38" opacity="0.63"/><circle cx="213.4" cy="100.2" r="0.74" fill="#3a3e38" opacity="0.55"/><circle cx="312.5" cy="178.3" r="0.42" fill="#3a3e38" opacity="0.45"/><circle cx="251.7" cy="61.4" r="0.45" fill="#3a3e38" opacity="0.31"/><circle cx="220.2" cy="206.9" r="0.88" fill="#3a3e38" opacity="0.35"/><circle cx="258.5" cy="100.0" r="0.70" fill="#3a3e38" opacity="0.46"/><circle cx="351.0" cy="216.7" r="0.38" fill="#3a3e38" opacity="0.59"/><circle cx="44.5" cy="22.7" r="0.51" fill="#3a3e38" opacity="0.59"/><circle cx="373.6" cy="38.6" r="0.53" fill="#3a3e38" opacity="0.31"/><circle cx="204.0" cy="113.0" r="0.56" fill="#3a3e38" opacity="0.42"/><circle cx="301.0" cy="185.9" r="0.51" fill="#3a3e38" opacity="0.46"/><circle cx="232.3" cy="170.9" r="0.89" fill="#3a3e38" opacity="0.46"/><circle cx="261.0" cy="125.9" r="0.79" fill="#3a3e38" opacity="0.36"/><circle cx="65.8" cy="36.0" r="0.86" fill="#3a3e38" opacity="0.40"/><circle cx="183.6" cy="38.7" r="0.53" fill="#3a3e38" opacity="0.31"/><circle cx="212.8" cy="43.4" r="0.69" fill="#3a3e38" opacity="0.41"/><circle cx="85.6" cy="112.9" r="0.55" fill="#3a3e38" opacity="0.40"/><circle cx="19.3" cy="27.2" r="0.84" fill="#3a3e38" opacity="0.42"/><circle cx="29.5" cy="51.4" r="0.62" fill="#3a3e38" opacity="0.70"/><circle cx="76.0" cy="191.8" r="0.62" fill="#3a3e38" opacity="0.47"/><circle cx="303.4" cy="95.2" r="0.38" fill="#3a3e38" opacity="0.52"/><circle cx="247.0" cy="141.7" r="0.50" fill="#3a3e38" opacity="0.68"/><circle cx="325.1" cy="217.8" r="0.59" fill="#3a3e38" opacity="0.63"/><circle cx="272.6" cy="50.0" r="0.36" fill="#3a3e38" opacity="0.37"/><circle cx="44.7" cy="29.3" r="0.55" fill="#3a3e38" opacity="0.60"/><circle cx="116.6" cy="119.4" r="0.36" fill="#3a3e38" opacity="0.38"/><circle cx="360.7" cy="16.3" r="0.64" fill="#3a3e38" opacity="0.62"/><circle cx="297.9" cy="164.8" r="0.57" fill="#3a3e38" opacity="0.62"/><circle cx="311.2" cy="171.4" r="0.89" fill="#3a3e38" opacity="0.34"/><circle cx="357.3" cy="96.5" r="0.74" fill="#3a3e38" opacity="0.40"/><circle cx="342.0" cy="18.8" r="0.67" fill="#3a3e38" opacity="0.39"/><circle cx="146.0" cy="89.7" r="0.71" fill="#3a3e38" opacity="0.62"/><circle cx="137.1" cy="144.8" r="0.54" fill="#3a3e38" opacity="0.41"/><circle cx="340.3" cy="79.9" r="0.40" fill="#3a3e38" opacity="0.43"/><circle cx="278.9" cy="57.3" r="0.76" fill="#3a3e38" opacity="0.52"/><circle cx="255.8" cy="50.3" r="0.41" fill="#3a3e38" opacity="0.36"/><circle cx="131.7" cy="102.3" r="0.36" fill="#3a3e38" opacity="0.50"/><circle cx="151.7" cy="79.9" r="0.65" fill="#3a3e38" opacity="0.68"/><circle cx="77.0" cy="194.5" r="0.53" fill="#3a3e38" opacity="0.60"/><circle cx="40.7" cy="216.4" r="0.59" fill="#3a3e38" opacity="0.69"/><circle cx="82.6" cy="97.7" r="0.74" fill="#3a3e38" opacity="0.37"/><circle cx="102.8" cy="152.8" r="0.87" fill="#3a3e38" opacity="0.43"/><circle cx="69.0" cy="87.2" r="0.89" fill="#3a3e38" opacity="0.36"/><circle cx="238.7" cy="91.5" r="0.70" fill="#3a3e38" opacity="0.38"/><circle cx="231.7" cy="196.0" r="0.82" fill="#3a3e38" opacity="0.55"/><circle cx="189.8" cy="130.4" r="0.41" fill="#3a3e38" opacity="0.63"/><circle cx="259.4" cy="106.9" r="0.72" fill="#3a3e38" opacity="0.47"/><circle cx="144.6" cy="61.2" r="0.68" fill="#3a3e38" opacity="0.53"/><circle cx="193.7" cy="20.6" r="0.70" fill="#3a3e38" opacity="0.48"/><circle cx="223.1" cy="135.9" r="0.86" fill="#3a3e38" opacity="0.36"/><circle cx="176.2" cy="217.5" r="0.76" fill="#3a3e38" opacity="0.43"/><circle cx="277.0" cy="216.8" r="0.57" fill="#3a3e38" opacity="0.65"/><circle cx="47.6" cy="217.0" r="0.62" fill="#3a3e38" opacity="0.39"/><circle cx="315.9" cy="147.1" r="0.87" fill="#3a3e38" opacity="0.63"/><circle cx="299.9" cy="118.9" r="0.90" fill="#3a3e38" opacity="0.33"/><circle cx="327.2" cy="159.9" r="0.49" fill="#3a3e38" opacity="0.62"/><circle cx="170.7" cy="123.9" r="0.83" fill="#3a3e38" opacity="0.38"/><circle cx="1.9" cy="200.0" r="0.93" fill="#4a4c40" opacity="0.38"/><circle cx="6.9" cy="45.3" r="0.88" fill="#4a4c40" opacity="0.40"/><circle cx="1.7" cy="48.7" r="0.90" fill="#4a4c40" opacity="0.39"/><circle cx="4.8" cy="198.3" r="0.94" fill="#4a4c40" opacity="0.38"/><circle cx="7.6" cy="46.7" r="0.74" fill="#4a4c40" opacity="0.70"/><circle cx="-5.4" cy="200.9" r="0.91" fill="#4a4c40" opacity="0.68"/><circle cx="1.3" cy="44.1" r="0.82" fill="#4a4c40" opacity="0.51"/><circle cx="13.4" cy="194.5" r="0.77" fill="#4a4c40" opacity="0.48"/><circle cx="10.0" cy="187.9" r="0.92" fill="#4a4c40" opacity="0.62"/><circle cx="-5.6" cy="194.6" r="0.65" fill="#4a4c40" opacity="0.64"/><circle cx="-2.1" cy="175.3" r="0.71" fill="#4a4c40" opacity="0.50"/><circle cx="2.9" cy="44.5" r="0.92" fill="#4a4c40" opacity="0.45"/><circle cx="9.0" cy="176.3" r="0.52" fill="#4a4c40" opacity="0.49"/><circle cx="7.4" cy="201.8" r="0.65" fill="#4a4c40" opacity="0.45"/><circle cx="-10.4" cy="51.5" r="0.41" fill="#4a4c40" opacity="0.48"/><circle cx="12.4" cy="184.2" r="0.65" fill="#4a4c40" opacity="0.47"/><circle cx="8.5" cy="38.2" r="0.67" fill="#4a4c40" opacity="0.42"/><circle cx="-0.6" cy="47.2" r="0.83" fill="#4a4c40" opacity="0.58"/><circle cx="-3.6" cy="55.9" r="0.68" fill="#4a4c40" opacity="0.48"/><circle cx="3.1" cy="42.7" r="0.98" fill="#4a4c40" opacity="0.69"/><circle cx="9.5" cy="46.8" r="1.00" fill="#4a4c40" opacity="0.37"/><circle cx="-4.2" cy="42.1" r="0.71" fill="#4a4c40" opacity="0.55"/><circle cx="-7.8" cy="47.2" r="0.40" fill="#4a4c40" opacity="0.69"/><circle cx="3.2" cy="180.4" r="0.80" fill="#4a4c40" opacity="0.69"/><circle cx="-8.8" cy="188.3" r="0.92" fill="#4a4c40" opacity="0.68"/><circle cx="48.9" cy="191.1" r="0.65" fill="#4a4c40" opacity="0.55"/><circle cx="57.7" cy="45.6" r="0.44" fill="#4a4c40" opacity="0.43"/><circle cx="59.9" cy="184.9" r="0.58" fill="#4a4c40" opacity="0.62"/><circle cx="47.6" cy="196.6" r="0.50" fill="#4a4c40" opacity="0.39"/><circle cx="48.9" cy="53.9" r="0.49" fill="#4a4c40" opacity="0.55"/><circle cx="51.3" cy="53.2" r="0.65" fill="#4a4c40" opacity="0.35"/><circle cx="45.3" cy="202.6" r="0.49" fill="#4a4c40" opacity="0.54"/><circle cx="50.4" cy="47.4" r="0.63" fill="#4a4c40" opacity="0.45"/><circle cx="62.3" cy="200.5" r="0.60" fill="#4a4c40" opacity="0.52"/><circle cx="40.4" cy="38.4" r="0.64" fill="#4a4c40" opacity="0.45"/><circle cx="44.9" cy="186.6" r="0.45" fill="#4a4c40" opacity="0.63"/><circle cx="41.0" cy="190.2" r="0.90" fill="#4a4c40" opacity="0.37"/><circle cx="50.1" cy="190.5" r="0.89" fill="#4a4c40" opacity="0.59"/><circle cx="47.1" cy="181.1" r="0.84" fill="#4a4c40" opacity="0.48"/><circle cx="58.9" cy="190.2" r="0.98" fill="#4a4c40" opacity="0.48"/><circle cx="42.8" cy="44.2" r="0.59" fill="#4a4c40" opacity="0.52"/><circle cx="55.3" cy="38.7" r="0.91" fill="#4a4c40" opacity="0.42"/><circle cx="38.3" cy="201.5" r="0.64" fill="#4a4c40" opacity="0.45"/><circle cx="44.5" cy="46.1" r="0.90" fill="#4a4c40" opacity="0.46"/><circle cx="42.9" cy="55.4" r="1.00" fill="#4a4c40" opacity="0.52"/><circle cx="39.1" cy="45.3" r="0.96" fill="#4a4c40" opacity="0.57"/><circle cx="61.4" cy="48.6" r="0.89" fill="#4a4c40" opacity="0.52"/><circle cx="39.6" cy="43.4" r="0.50" fill="#4a4c40" opacity="0.38"/><circle cx="46.2" cy="44.5" r="0.67" fill="#4a4c40" opacity="0.66"/><circle cx="38.5" cy="178.8" r="0.80" fill="#4a4c40" opacity="0.54"/><circle cx="81.3" cy="48.6" r="0.95" fill="#4a4c40" opacity="0.42"/><circle cx="92.8" cy="41.7" r="0.49" fill="#4a4c40" opacity="0.45"/><circle cx="68.3" cy="196.2" r="0.70" fill="#4a4c40" opacity="0.59"/><circle cx="77.3" cy="40.4" r="0.73" fill="#4a4c40" opacity="0.65"/><circle cx="79.8" cy="205.0" r="0.63" fill="#4a4c40" opacity="0.63"/><circle cx="80.0" cy="185.0" r="0.61" fill="#4a4c40" opacity="0.55"/><circle cx="62.3" cy="48.7" r="0.78" fill="#4a4c40" opacity="0.47"/><circle cx="87.2" cy="45.7" r="0.88" fill="#4a4c40" opacity="0.44"/><circle cx="79.2" cy="50.5" r="0.99" fill="#4a4c40" opacity="0.67"/><circle cx="77.8" cy="41.4" r="0.51" fill="#4a4c40" opacity="0.57"/><circle cx="76.0" cy="205.0" r="0.74" fill="#4a4c40" opacity="0.54"/><circle cx="94.4" cy="195.5" r="0.88" fill="#4a4c40" opacity="0.38"/><circle cx="79.9" cy="194.7" r="0.47" fill="#4a4c40" opacity="0.62"/><circle cx="86.1" cy="184.6" r="0.81" fill="#4a4c40" opacity="0.48"/><circle cx="88.1" cy="188.5" r="0.47" fill="#4a4c40" opacity="0.48"/><circle cx="90.5" cy="205.0" r="0.57" fill="#4a4c40" opacity="0.55"/><circle cx="78.8" cy="49.0" r="0.92" fill="#4a4c40" opacity="0.41"/><circle cx="80.9" cy="53.2" r="0.73" fill="#4a4c40" opacity="0.61"/><circle cx="70.4" cy="202.6" r="0.58" fill="#4a4c40" opacity="0.50"/><circle cx="74.0" cy="48.4" r="0.69" fill="#4a4c40" opacity="0.59"/><circle cx="76.6" cy="188.5" r="0.93" fill="#4a4c40" opacity="0.38"/><circle cx="75.3" cy="40.8" r="0.58" fill="#4a4c40" opacity="0.35"/><circle cx="93.0" cy="194.3" r="0.92" fill="#4a4c40" opacity="0.37"/><circle cx="84.4" cy="46.1" r="0.65" fill="#4a4c40" opacity="0.40"/><circle cx="92.2" cy="39.2" r="0.66" fill="#4a4c40" opacity="0.59"/><circle cx="112.9" cy="197.6" r="0.96" fill="#4a4c40" opacity="0.66"/><circle cx="117.6" cy="48.6" r="0.73" fill="#4a4c40" opacity="0.69"/><circle cx="123.6" cy="190.6" r="0.55" fill="#4a4c40" opacity="0.43"/><circle cx="114.5" cy="49.8" r="0.92" fill="#4a4c40" opacity="0.68"/><circle cx="111.9" cy="193.0" r="0.96" fill="#4a4c40" opacity="0.38"/><circle cx="99.9" cy="195.3" r="0.97" fill="#4a4c40" opacity="0.36"/><circle cx="115.6" cy="56.2" r="0.40" fill="#4a4c40" opacity="0.37"/><circle cx="119.5" cy="195.6" r="0.53" fill="#4a4c40" opacity="0.49"/><circle cx="109.7" cy="50.0" r="0.75" fill="#4a4c40" opacity="0.53"/><circle cx="110.4" cy="187.1" r="0.51" fill="#4a4c40" opacity="0.40"/><circle cx="116.2" cy="200.0" r="0.51" fill="#4a4c40" opacity="0.59"/><circle cx="108.8" cy="42.7" r="0.51" fill="#4a4c40" opacity="0.43"/><circle cx="111.5" cy="45.6" r="0.80" fill="#4a4c40" opacity="0.63"/><circle cx="112.6" cy="46.5" r="0.43" fill="#4a4c40" opacity="0.54"/><circle cx="110.5" cy="51.8" r="0.95" fill="#4a4c40" opacity="0.70"/><circle cx="112.5" cy="195.0" r="1.00" fill="#4a4c40" opacity="0.42"/><circle cx="104.8" cy="52.4" r="0.69" fill="#4a4c40" opacity="0.64"/><circle cx="122.0" cy="47.5" r="0.49" fill="#4a4c40" opacity="0.42"/><circle cx="116.5" cy="179.7" r="0.61" fill="#4a4c40" opacity="0.68"/><circle cx="121.0" cy="53.2" r="0.82" fill="#4a4c40" opacity="0.43"/><circle cx="113.7" cy="180.2" r="0.62" fill="#4a4c40" opacity="0.60"/><circle cx="118.0" cy="205.8" r="0.81" fill="#4a4c40" opacity="0.39"/><circle cx="102.5" cy="200.3" r="0.72" fill="#4a4c40" opacity="0.54"/><circle cx="105.7" cy="43.5" r="0.79" fill="#4a4c40" opacity="0.36"/><circle cx="112.6" cy="59.0" r="0.50" fill="#4a4c40" opacity="0.47"/><circle cx="155.6" cy="197.0" r="0.61" fill="#4a4c40" opacity="0.70"/><circle cx="144.7" cy="45.6" r="0.97" fill="#4a4c40" opacity="0.69"/><circle cx="170.3" cy="48.3" r="0.43" fill="#4a4c40" opacity="0.49"/><circle cx="161.3" cy="52.6" r="0.53" fill="#4a4c40" opacity="0.63"/><circle cx="151.5" cy="47.0" r="0.50" fill="#4a4c40" opacity="0.69"/><circle cx="161.0" cy="203.6" r="0.81" fill="#4a4c40" opacity="0.44"/><circle cx="160.0" cy="197.7" r="0.66" fill="#4a4c40" opacity="0.56"/><circle cx="166.4" cy="209.1" r="0.54" fill="#4a4c40" opacity="0.68"/><circle cx="167.7" cy="196.4" r="0.86" fill="#4a4c40" opacity="0.68"/><circle cx="166.3" cy="200.2" r="0.49" fill="#4a4c40" opacity="0.68"/><circle cx="159.6" cy="49.2" r="0.70" fill="#4a4c40" opacity="0.67"/><circle cx="155.1" cy="42.1" r="0.80" fill="#4a4c40" opacity="0.49"/><circle cx="148.6" cy="189.8" r="0.70" fill="#4a4c40" opacity="0.52"/><circle cx="159.3" cy="177.6" r="0.72" fill="#4a4c40" opacity="0.37"/><circle cx="159.8" cy="48.6" r="0.55" fill="#4a4c40" opacity="0.67"/><circle cx="157.2" cy="41.7" r="0.97" fill="#4a4c40" opacity="0.52"/><circle cx="155.3" cy="196.5" r="0.96" fill="#4a4c40" opacity="0.58"/><circle cx="154.2" cy="184.9" r="0.99" fill="#4a4c40" opacity="0.67"/><circle cx="155.9" cy="38.8" r="0.47" fill="#4a4c40" opacity="0.52"/><circle cx="149.6" cy="46.7" r="0.97" fill="#4a4c40" opacity="0.58"/><circle cx="151.7" cy="48.3" r="0.99" fill="#4a4c40" opacity="0.41"/><circle cx="154.8" cy="197.8" r="0.59" fill="#4a4c40" opacity="0.42"/><circle cx="156.7" cy="39.1" r="0.85" fill="#4a4c40" opacity="0.58"/><circle cx="159.4" cy="194.8" r="0.87" fill="#4a4c40" opacity="0.66"/><circle cx="147.2" cy="186.8" r="0.83" fill="#4a4c40" opacity="0.36"/><circle cx="188.7" cy="51.4" r="0.54" fill="#4a4c40" opacity="0.57"/><circle cx="196.7" cy="48.9" r="0.42" fill="#4a4c40" opacity="0.44"/><circle cx="196.9" cy="188.8" r="0.96" fill="#4a4c40" opacity="0.67"/><circle cx="190.4" cy="58.9" r="0.60" fill="#4a4c40" opacity="0.45"/><circle cx="183.6" cy="41.3" r="0.46" fill="#4a4c40" opacity="0.60"/><circle cx="203.7" cy="186.3" r="0.54" fill="#4a4c40" opacity="0.46"/><circle cx="193.3" cy="193.0" r="0.58" fill="#4a4c40" opacity="0.65"/><circle cx="198.7" cy="195.4" r="0.95" fill="#4a4c40" opacity="0.38"/><circle cx="207.3" cy="195.4" r="0.86" fill="#4a4c40" opacity="0.54"/><circle cx="185.2" cy="196.4" r="1.00" fill="#4a4c40" opacity="0.53"/><circle cx="191.5" cy="50.2" r="0.77" fill="#4a4c40" opacity="0.41"/><circle cx="204.5" cy="177.9" r="0.86" fill="#4a4c40" opacity="0.58"/><circle cx="187.0" cy="184.6" r="0.99" fill="#4a4c40" opacity="0.68"/><circle cx="195.7" cy="50.6" r="0.56" fill="#4a4c40" opacity="0.59"/><circle cx="189.8" cy="193.4" r="0.70" fill="#4a4c40" opacity="0.62"/><circle cx="194.5" cy="192.9" r="0.43" fill="#4a4c40" opacity="0.60"/><circle cx="206.0" cy="193.7" r="0.64" fill="#4a4c40" opacity="0.48"/><circle cx="193.7" cy="38.9" r="0.91" fill="#4a4c40" opacity="0.52"/><circle cx="191.3" cy="43.3" r="0.60" fill="#4a4c40" opacity="0.36"/><circle cx="199.0" cy="40.1" r="0.55" fill="#4a4c40" opacity="0.63"/><circle cx="189.5" cy="184.6" r="0.80" fill="#4a4c40" opacity="0.42"/><circle cx="190.3" cy="48.4" r="0.67" fill="#4a4c40" opacity="0.52"/><circle cx="195.9" cy="186.7" r="0.81" fill="#4a4c40" opacity="0.53"/><circle cx="198.4" cy="36.0" r="0.58" fill="#4a4c40" opacity="0.60"/><circle cx="192.5" cy="188.8" r="0.66" fill="#4a4c40" opacity="0.58"/><circle cx="240.0" cy="173.0" r="0.74" fill="#4a4c40" opacity="0.49"/><circle cx="234.4" cy="186.6" r="0.56" fill="#4a4c40" opacity="0.56"/><circle cx="239.6" cy="196.6" r="0.44" fill="#4a4c40" opacity="0.55"/><circle cx="238.3" cy="180.0" r="0.44" fill="#4a4c40" opacity="0.69"/><circle cx="237.2" cy="186.7" r="0.82" fill="#4a4c40" opacity="0.55"/><circle cx="243.6" cy="32.8" r="0.85" fill="#4a4c40" opacity="0.55"/><circle cx="241.1" cy="203.7" r="0.72" fill="#4a4c40" opacity="0.52"/><circle cx="239.9" cy="200.5" r="0.80" fill="#4a4c40" opacity="0.45"/><circle cx="240.7" cy="197.8" r="0.68" fill="#4a4c40" opacity="0.55"/><circle cx="245.0" cy="192.6" r="0.61" fill="#4a4c40" opacity="0.62"/><circle cx="243.0" cy="48.9" r="0.63" fill="#4a4c40" opacity="0.45"/><circle cx="229.9" cy="43.1" r="0.72" fill="#4a4c40" opacity="0.49"/><circle cx="229.8" cy="52.0" r="0.52" fill="#4a4c40" opacity="0.36"/><circle cx="230.4" cy="53.0" r="0.84" fill="#4a4c40" opacity="0.44"/><circle cx="229.3" cy="204.7" r="0.53" fill="#4a4c40" opacity="0.60"/><circle cx="240.4" cy="45.6" r="0.91" fill="#4a4c40" opacity="0.60"/><circle cx="251.7" cy="193.4" r="0.53" fill="#4a4c40" opacity="0.43"/><circle cx="233.8" cy="189.3" r="0.87" fill="#4a4c40" opacity="0.66"/><circle cx="240.2" cy="182.1" r="0.61" fill="#4a4c40" opacity="0.60"/><circle cx="232.9" cy="49.2" r="0.69" fill="#4a4c40" opacity="0.37"/><circle cx="229.6" cy="47.3" r="0.46" fill="#4a4c40" opacity="0.37"/><circle cx="230.5" cy="208.1" r="0.44" fill="#4a4c40" opacity="0.39"/><circle cx="247.7" cy="48.0" r="0.82" fill="#4a4c40" opacity="0.46"/><circle cx="242.8" cy="43.0" r="0.61" fill="#4a4c40" opacity="0.48"/><circle cx="238.5" cy="191.9" r="0.65" fill="#4a4c40" opacity="0.41"/><circle cx="267.2" cy="48.4" r="0.68" fill="#4a4c40" opacity="0.53"/><circle cx="261.3" cy="192.2" r="0.82" fill="#4a4c40" opacity="0.53"/><circle cx="257.7" cy="195.6" r="0.68" fill="#4a4c40" opacity="0.54"/><circle cx="255.7" cy="45.2" r="0.58" fill="#4a4c40" opacity="0.49"/><circle cx="263.4" cy="190.4" r="0.57" fill="#4a4c40" opacity="0.42"/><circle cx="273.8" cy="187.7" r="0.45" fill="#4a4c40" opacity="0.53"/><circle cx="257.7" cy="48.0" r="0.44" fill="#4a4c40" opacity="0.44"/><circle cx="273.5" cy="186.0" r="0.71" fill="#4a4c40" opacity="0.70"/><circle cx="265.6" cy="61.1" r="0.92" fill="#4a4c40" opacity="0.63"/><circle cx="263.9" cy="172.0" r="0.75" fill="#4a4c40" opacity="0.54"/><circle cx="272.0" cy="54.4" r="0.68" fill="#4a4c40" opacity="0.67"/><circle cx="264.2" cy="183.7" r="0.99" fill="#4a4c40" opacity="0.67"/><circle cx="268.6" cy="46.4" r="0.76" fill="#4a4c40" opacity="0.43"/><circle cx="264.7" cy="49.9" r="0.56" fill="#4a4c40" opacity="0.64"/><circle cx="261.5" cy="45.6" r="0.61" fill="#4a4c40" opacity="0.60"/><circle cx="263.8" cy="184.4" r="0.79" fill="#4a4c40" opacity="0.69"/><circle cx="258.7" cy="50.6" r="0.59" fill="#4a4c40" opacity="0.39"/><circle cx="275.2" cy="196.0" r="0.63" fill="#4a4c40" opacity="0.58"/><circle cx="262.3" cy="40.7" r="0.54" fill="#4a4c40" opacity="0.45"/><circle cx="273.9" cy="43.3" r="0.63" fill="#4a4c40" opacity="0.68"/><circle cx="267.7" cy="188.9" r="0.96" fill="#4a4c40" opacity="0.46"/><circle cx="272.3" cy="189.0" r="0.43" fill="#4a4c40" opacity="0.36"/><circle cx="264.5" cy="191.3" r="0.63" fill="#4a4c40" opacity="0.68"/><circle cx="261.0" cy="41.6" r="0.67" fill="#4a4c40" opacity="0.52"/><circle cx="267.0" cy="53.0" r="0.48" fill="#4a4c40" opacity="0.48"/><circle cx="301.9" cy="189.0" r="0.83" fill="#4a4c40" opacity="0.37"/><circle cx="303.4" cy="48.3" r="0.77" fill="#4a4c40" opacity="0.66"/><circle cx="301.4" cy="54.2" r="0.91" fill="#4a4c40" opacity="0.56"/><circle cx="308.4" cy="48.2" r="0.54" fill="#4a4c40" opacity="0.41"/><circle cx="294.8" cy="48.6" r="0.50" fill="#4a4c40" opacity="0.54"/><circle cx="304.2" cy="45.0" r="0.63" fill="#4a4c40" opacity="0.52"/><circle cx="308.9" cy="48.7" r="0.65" fill="#4a4c40" opacity="0.63"/><circle cx="306.0" cy="187.4" r="0.96" fill="#4a4c40" opacity="0.40"/><circle cx="293.9" cy="52.2" r="0.56" fill="#4a4c40" opacity="0.45"/><circle cx="307.7" cy="47.6" r="0.82" fill="#4a4c40" opacity="0.67"/><circle cx="303.3" cy="51.6" r="0.73" fill="#4a4c40" opacity="0.39"/><circle cx="292.7" cy="197.4" r="1.00" fill="#4a4c40" opacity="0.64"/><circle cx="292.4" cy="36.5" r="0.48" fill="#4a4c40" opacity="0.62"/><circle cx="305.7" cy="195.8" r="0.53" fill="#4a4c40" opacity="0.68"/><circle cx="297.3" cy="49.5" r="0.56" fill="#4a4c40" opacity="0.48"/><circle cx="290.5" cy="187.7" r="0.52" fill="#4a4c40" opacity="0.54"/><circle cx="300.8" cy="192.4" r="0.78" fill="#4a4c40" opacity="0.51"/><circle cx="300.9" cy="191.9" r="0.83" fill="#4a4c40" opacity="0.43"/><circle cx="291.4" cy="202.2" r="0.56" fill="#4a4c40" opacity="0.55"/><circle cx="289.9" cy="203.2" r="0.72" fill="#4a4c40" opacity="0.57"/><circle cx="308.4" cy="43.3" r="0.81" fill="#4a4c40" opacity="0.50"/><circle cx="300.1" cy="50.5" r="0.74" fill="#4a4c40" opacity="0.59"/><circle cx="302.9" cy="193.5" r="0.81" fill="#4a4c40" opacity="0.44"/><circle cx="301.8" cy="199.7" r="0.96" fill="#4a4c40" opacity="0.37"/><circle cx="296.8" cy="42.4" r="0.50" fill="#4a4c40" opacity="0.47"/><circle cx="340.4" cy="198.0" r="0.95" fill="#4a4c40" opacity="0.48"/><circle cx="332.3" cy="43.1" r="0.92" fill="#4a4c40" opacity="0.59"/><circle cx="339.5" cy="191.1" r="0.78" fill="#4a4c40" opacity="0.51"/><circle cx="342.5" cy="47.4" r="0.71" fill="#4a4c40" opacity="0.37"/><circle cx="343.8" cy="51.6" r="0.99" fill="#4a4c40" opacity="0.63"/><circle cx="334.1" cy="179.4" r="0.98" fill="#4a4c40" opacity="0.59"/><circle cx="335.3" cy="187.5" r="0.45" fill="#4a4c40" opacity="0.39"/><circle cx="333.5" cy="208.8" r="0.49" fill="#4a4c40" opacity="0.50"/><circle cx="332.2" cy="184.9" r="0.79" fill="#4a4c40" opacity="0.46"/><circle cx="325.8" cy="54.3" r="0.69" fill="#4a4c40" opacity="0.40"/><circle cx="335.2" cy="53.9" r="0.74" fill="#4a4c40" opacity="0.40"/><circle cx="333.8" cy="49.8" r="0.60" fill="#4a4c40" opacity="0.40"/><circle cx="335.1" cy="47.5" r="0.99" fill="#4a4c40" opacity="0.47"/><circle cx="324.7" cy="53.5" r="0.68" fill="#4a4c40" opacity="0.46"/><circle cx="324.5" cy="50.0" r="0.65" fill="#4a4c40" opacity="0.41"/><circle cx="332.0" cy="47.8" r="0.89" fill="#4a4c40" opacity="0.43"/><circle cx="338.0" cy="185.0" r="0.55" fill="#4a4c40" opacity="0.54"/><circle cx="334.2" cy="191.5" r="0.80" fill="#4a4c40" opacity="0.65"/><circle cx="325.6" cy="50.3" r="0.47" fill="#4a4c40" opacity="0.38"/><circle cx="341.1" cy="181.9" r="0.52" fill="#4a4c40" opacity="0.38"/><circle cx="335.9" cy="48.1" r="0.48" fill="#4a4c40" opacity="0.60"/><circle cx="328.9" cy="193.2" r="0.64" fill="#4a4c40" opacity="0.58"/><circle cx="327.5" cy="197.1" r="0.47" fill="#4a4c40" opacity="0.44"/><circle cx="328.2" cy="48.4" r="0.91" fill="#4a4c40" opacity="0.49"/><circle cx="344.8" cy="187.8" r="0.74" fill="#4a4c40" opacity="0.69"/><circle cx="382.6" cy="56.8" r="0.99" fill="#4a4c40" opacity="0.54"/><circle cx="371.9" cy="185.7" r="0.54" fill="#4a4c40" opacity="0.66"/><circle cx="372.4" cy="193.7" r="0.88" fill="#4a4c40" opacity="0.46"/><circle cx="381.2" cy="192.6" r="0.70" fill="#4a4c40" opacity="0.35"/><circle cx="374.3" cy="48.0" r="0.67" fill="#4a4c40" opacity="0.56"/><circle cx="368.9" cy="193.7" r="0.66" fill="#4a4c40" opacity="0.44"/><circle cx="382.1" cy="52.2" r="0.48" fill="#4a4c40" opacity="0.63"/><circle cx="367.4" cy="52.4" r="0.70" fill="#4a4c40" opacity="0.41"/><circle cx="372.7" cy="189.6" r="0.97" fill="#4a4c40" opacity="0.62"/><circle cx="381.1" cy="185.7" r="0.80" fill="#4a4c40" opacity="0.41"/><circle cx="370.4" cy="181.0" r="0.46" fill="#4a4c40" opacity="0.40"/><circle cx="375.6" cy="193.2" r="0.47" fill="#4a4c40" opacity="0.40"/><circle cx="380.3" cy="52.7" r="0.91" fill="#4a4c40" opacity="0.63"/><circle cx="370.6" cy="53.3" r="0.94" fill="#4a4c40" opacity="0.42"/><circle cx="371.5" cy="52.9" r="0.65" fill="#4a4c40" opacity="0.53"/><circle cx="367.7" cy="199.5" r="0.44" fill="#4a4c40" opacity="0.51"/><circle cx="368.8" cy="184.0" r="0.40" fill="#4a4c40" opacity="0.70"/><circle cx="373.4" cy="49.5" r="0.69" fill="#4a4c40" opacity="0.58"/><circle cx="367.8" cy="49.9" r="0.79" fill="#4a4c40" opacity="0.48"/><circle cx="371.5" cy="37.1" r="0.95" fill="#4a4c40" opacity="0.52"/><circle cx="380.4" cy="192.6" r="0.66" fill="#4a4c40" opacity="0.51"/><circle cx="385.2" cy="193.3" r="0.70" fill="#4a4c40" opacity="0.68"/><circle cx="387.9" cy="190.7" r="0.74" fill="#4a4c40" opacity="0.68"/><circle cx="373.2" cy="36.9" r="0.90" fill="#4a4c40" opacity="0.36"/><circle cx="374.2" cy="190.6" r="0.60" fill="#4a4c40" opacity="0.41"/><rect x="0" y="0" width="376" height="14" fill="url(#rail)"/><rect x="0" y="12.5" width="376" height="1.5" fill="#3e444b" opacity="0.7"/><rect x="0" y="219" width="376" height="17" fill="url(#brail)"/><rect x="0" y="231" width="376" height="5" fill="#8a9096" opacity="0.5"/><rect x="0" y="219" width="113" height="17" fill="#161616"/><ellipse cx="14" cy="224" rx="12" ry="4" fill="#8a8e90" opacity="0.75" filter="url(#blur2)"/><ellipse cx="44" cy="224" rx="10" ry="3.5" fill="#9a9ea0" opacity="0.6" filter="url(#blur2)"/><rect x="0" y="229" width="90" height="1.5" fill="#4a4a4a" opacity="0.8"/><rect x="0" y="219" width="376" height="1.2" fill="#2e3338" opacity="0.6"/><ellipse cx="3.5" cy="47" rx="8" ry="3.5" fill="#55584a" opacity="0.5" filter="url(#blur2)"/><ellipse cx="3.5" cy="190" rx="9" ry="4" fill="#55584a" opacity="0.45" filter="url(#blur2)"/><rect x="10" y="54" width="2.5" height="130" fill="#6a6f70" opacity="0.5"/><rect x="-3" y="51.6" width="13" height="92.5" fill="url(#term)" stroke="#6f6d66" stroke-width="0.6"/><rect x="2.4" y="56" width="2.2" height="44" fill="#2a2925"/><rect x="-2.5" y="72" width="1.5" height="2" fill="#77756d"/><rect x="8" y="72" width="1.5" height="2" fill="#77756d"/><path d="M-2.5 144 L9.5 144 L8 150 L8 160 L10.5 166 L10 184 L-3 184 L-3.5 166 L-1 160 L-1 150 Z" fill="#cbc7bc" stroke="#6f6d66" stroke-width="0.6"/><rect x="1" y="149" width="1" height="16" fill="#5f5d55"/><rect x="5" y="149" width="1" height="16" fill="#5f5d55"/><circle cx="3.5" cy="176" r="2" fill="#3a3934"/><ellipse cx="47.5" cy="47" rx="8" ry="3.5" fill="#55584a" opacity="0.5" filter="url(#blur2)"/><ellipse cx="47.5" cy="190" rx="9" ry="4" fill="#55584a" opacity="0.45" filter="url(#blur2)"/><rect x="54" y="54" width="2.5" height="130" fill="#6a6f70" opacity="0.5"/><rect x="41" y="51.6" width="13" height="92.5" fill="url(#term)" stroke="#6f6d66" stroke-width="0.6"/><rect x="46.4" y="56" width="2.2" height="44" fill="#2a2925"/><rect x="41.5" y="72" width="1.5" height="2" fill="#77756d"/><rect x="52" y="72" width="1.5" height="2" fill="#77756d"/><path d="M41.5 144 L53.5 144 L52 150 L52 160 L54.5 166 L54 184 L41 184 L40.5 166 L43 160 L43 150 Z" fill="#cbc7bc" stroke="#6f6d66" stroke-width="0.6"/><rect x="45" y="149" width="1" height="16" fill="#5f5d55"/><rect x="49" y="149" width="1" height="16" fill="#5f5d55"/><circle cx="47.5" cy="176" r="2" fill="#3a3934"/><ellipse cx="79.0" cy="47" rx="8" ry="3.5" fill="#55584a" opacity="0.5" filter="url(#blur2)"/><ellipse cx="79.0" cy="190" rx="9" ry="4" fill="#55584a" opacity="0.45" filter="url(#blur2)"/><rect x="85.5" y="54" width="2.5" height="130" fill="#6a6f70" opacity="0.5"/><rect x="72.5" y="51.6" width="13" height="92.5" fill="url(#term)" stroke="#6f6d66" stroke-width="0.6"/><rect x="77.9" y="56" width="2.2" height="44" fill="#2a2925"/><rect x="73.0" y="72" width="1.5" height="2" fill="#77756d"/><rect x="83.5" y="72" width="1.5" height="2" fill="#77756d"/><path d="M73.0 144 L85.0 144 L83.5 150 L83.5 160 L86.0 166 L85.5 184 L72.5 184 L72.0 166 L74.5 160 L74.5 150 Z" fill="#cbc7bc" stroke="#6f6d66" stroke-width="0.6"/><rect x="76.5" y="149" width="1" height="16" fill="#5f5d55"/><rect x="80.5" y="149" width="1" height="16" fill="#5f5d55"/><circle cx="79.0" cy="176" r="2" fill="#3a3934"/><ellipse cx="115.0" cy="47" rx="8" ry="3.5" fill="#55584a" opacity="0.5" filter="url(#blur2)"/><ellipse cx="115.0" cy="190" rx="9" ry="4" fill="#55584a" opacity="0.45" filter="url(#blur2)"/><rect x="121.5" y="54" width="2.5" height="130" fill="#6a6f70" opacity="0.5"/><rect x="108.5" y="51.6" width="13" height="92.5" fill="url(#term)" stroke="#6f6d66" stroke-width="0.6"/><rect x="113.9" y="56" width="2.2" height="44" fill="#2a2925"/><rect x="109.0" y="72" width="1.5" height="2" fill="#77756d"/><rect x="119.5" y="72" width="1.5" height="2" fill="#77756d"/><path d="M109.0 144 L121.0 144 L119.5 150 L119.5 160 L122.0 166 L121.5 184 L108.5 184 L108.0 166 L110.5 160 L110.5 150 Z" fill="#cbc7bc" stroke="#6f6d66" stroke-width="0.6"/><rect x="112.5" y="149" width="1" height="16" fill="#5f5d55"/><rect x="116.5" y="149" width="1" height="16" fill="#5f5d55"/><circle cx="115.0" cy="176" r="2" fill="#3a3934"/><ellipse cx="160.2" cy="47" rx="8" ry="3.5" fill="#55584a" opacity="0.5" filter="url(#blur2)"/><ellipse cx="160.2" cy="190" rx="9" ry="4" fill="#55584a" opacity="0.45" filter="url(#blur2)"/><rect x="166.7" y="54" width="2.5" height="130" fill="#6a6f70" opacity="0.5"/><rect x="153.7" y="51.6" width="13" height="92.5" fill="url(#term)" stroke="#6f6d66" stroke-width="0.6"/><rect x="159.1" y="56" width="2.2" height="44" fill="#2a2925"/><rect x="154.2" y="72" width="1.5" height="2" fill="#77756d"/><rect x="164.7" y="72" width="1.5" height="2" fill="#77756d"/><path d="M154.2 144 L166.2 144 L164.7 150 L164.7 160 L167.2 166 L166.7 184 L153.7 184 L153.2 166 L155.7 160 L155.7 150 Z" fill="#cbc7bc" stroke="#6f6d66" stroke-width="0.6"/><rect x="157.7" y="149" width="1" height="16" fill="#5f5d55"/><rect x="161.7" y="149" width="1" height="16" fill="#5f5d55"/><circle cx="160.2" cy="176" r="2" fill="#3a3934"/><ellipse cx="194.1" cy="47" rx="8" ry="3.5" fill="#55584a" opacity="0.5" filter="url(#blur2)"/><ellipse cx="194.1" cy="190" rx="9" ry="4" fill="#55584a" opacity="0.45" filter="url(#blur2)"/><rect x="200.6" y="54" width="2.5" height="130" fill="#6a6f70" opacity="0.5"/><rect x="187.6" y="51.6" width="13" height="92.5" fill="url(#term)" stroke="#6f6d66" stroke-width="0.6"/><rect x="193.0" y="56" width="2.2" height="44" fill="#2a2925"/><rect x="188.1" y="72" width="1.5" height="2" fill="#77756d"/><rect x="198.6" y="72" width="1.5" height="2" fill="#77756d"/><path d="M188.1 144 L200.1 144 L198.6 150 L198.6 160 L201.1 166 L200.6 184 L187.6 184 L187.1 166 L189.6 160 L189.6 150 Z" fill="#cbc7bc" stroke="#6f6d66" stroke-width="0.6"/><rect x="191.6" y="149" width="1" height="16" fill="#5f5d55"/><rect x="195.6" y="149" width="1" height="16" fill="#5f5d55"/><circle cx="194.1" cy="176" r="2" fill="#3a3934"/><ellipse cx="238.5" cy="47" rx="8" ry="3.5" fill="#55584a" opacity="0.5" filter="url(#blur2)"/><ellipse cx="238.5" cy="190" rx="9" ry="4" fill="#55584a" opacity="0.45" filter="url(#blur2)"/><rect x="245" y="54" width="2.5" height="130" fill="#6a6f70" opacity="0.5"/><rect x="232" y="51.6" width="13" height="92.5" fill="url(#term)" stroke="#6f6d66" stroke-width="0.6"/><rect x="237.4" y="56" width="2.2" height="44" fill="#2a2925"/><rect x="232.5" y="72" width="1.5" height="2" fill="#77756d"/><rect x="243" y="72" width="1.5" height="2" fill="#77756d"/><path d="M232.5 144 L244.5 144 L243 150 L243 160 L245.5 166 L245 184 L232 184 L231.5 166 L234 160 L234 150 Z" fill="#cbc7bc" stroke="#6f6d66" stroke-width="0.6"/><rect x="236" y="149" width="1" height="16" fill="#5f5d55"/><rect x="240" y="149" width="1" height="16" fill="#5f5d55"/><circle cx="238.5" cy="176" r="2" fill="#3a3934"/><ellipse cx="266.1" cy="47" rx="8" ry="3.5" fill="#55584a" opacity="0.5" filter="url(#blur2)"/><ellipse cx="266.1" cy="190" rx="9" ry="4" fill="#55584a" opacity="0.45" filter="url(#blur2)"/><rect x="272.6" y="54" width="2.5" height="130" fill="#6a6f70" opacity="0.5"/><rect x="259.6" y="51.6" width="13" height="92.5" fill="url(#term)" stroke="#6f6d66" stroke-width="0.6"/><rect x="265.0" y="56" width="2.2" height="44" fill="#2a2925"/><rect x="260.1" y="72" width="1.5" height="2" fill="#77756d"/><rect x="270.6" y="72" width="1.5" height="2" fill="#77756d"/><path d="M260.1 144 L272.1 144 L270.6 150 L270.6 160 L273.1 166 L272.6 184 L259.6 184 L259.1 166 L261.6 160 L261.6 150 Z" fill="#cbc7bc" stroke="#6f6d66" stroke-width="0.6"/><rect x="263.6" y="149" width="1" height="16" fill="#5f5d55"/><rect x="267.6" y="149" width="1" height="16" fill="#5f5d55"/><circle cx="266.1" cy="176" r="2" fill="#3a3934"/><ellipse cx="300.9" cy="47" rx="8" ry="3.5" fill="#55584a" opacity="0.5" filter="url(#blur2)"/><ellipse cx="300.9" cy="190" rx="9" ry="4" fill="#55584a" opacity="0.45" filter="url(#blur2)"/><rect x="307.4" y="54" width="2.5" height="130" fill="#6a6f70" opacity="0.5"/><rect x="294.4" y="51.6" width="13" height="92.5" fill="url(#term)" stroke="#6f6d66" stroke-width="0.6"/><rect x="299.79999999999995" y="56" width="2.2" height="44" fill="#2a2925"/><rect x="294.9" y="72" width="1.5" height="2" fill="#77756d"/><rect x="305.4" y="72" width="1.5" height="2" fill="#77756d"/><path d="M294.9 144 L306.9 144 L305.4 150 L305.4 160 L307.9 166 L307.4 184 L294.4 184 L293.9 166 L296.4 160 L296.4 150 Z" fill="#cbc7bc" stroke="#6f6d66" stroke-width="0.6"/><rect x="298.4" y="149" width="1" height="16" fill="#5f5d55"/><rect x="302.4" y="149" width="1" height="16" fill="#5f5d55"/><circle cx="300.9" cy="176" r="2" fill="#3a3934"/><ellipse cx="335.7" cy="47" rx="8" ry="3.5" fill="#55584a" opacity="0.5" filter="url(#blur2)"/><ellipse cx="335.7" cy="190" rx="9" ry="4" fill="#55584a" opacity="0.45" filter="url(#blur2)"/><rect x="342.2" y="54" width="2.5" height="130" fill="#6a6f70" opacity="0.5"/><rect x="329.2" y="51.6" width="13" height="92.5" fill="url(#term)" stroke="#6f6d66" stroke-width="0.6"/><rect x="334.59999999999997" y="56" width="2.2" height="44" fill="#2a2925"/><rect x="329.7" y="72" width="1.5" height="2" fill="#77756d"/><rect x="340.2" y="72" width="1.5" height="2" fill="#77756d"/><path d="M329.7 144 L341.7 144 L340.2 150 L340.2 160 L342.7 166 L342.2 184 L329.2 184 L328.7 166 L331.2 160 L331.2 150 Z" fill="#cbc7bc" stroke="#6f6d66" stroke-width="0.6"/><rect x="333.2" y="149" width="1" height="16" fill="#5f5d55"/><rect x="337.2" y="149" width="1" height="16" fill="#5f5d55"/><circle cx="335.7" cy="176" r="2" fill="#3a3934"/><ellipse cx="376.5" cy="47" rx="8" ry="3.5" fill="#55584a" opacity="0.5" filter="url(#blur2)"/><ellipse cx="376.5" cy="190" rx="9" ry="4" fill="#55584a" opacity="0.45" filter="url(#blur2)"/><rect x="383" y="54" width="2.5" height="130" fill="#6a6f70" opacity="0.5"/><rect x="370" y="51.6" width="13" height="92.5" fill="url(#term)" stroke="#6f6d66" stroke-width="0.6"/><rect x="375.4" y="56" width="2.2" height="44" fill="#2a2925"/><rect x="370.5" y="72" width="1.5" height="2" fill="#77756d"/><rect x="381" y="72" width="1.5" height="2" fill="#77756d"/><path d="M370.5 144 L382.5 144 L381 150 L381 160 L383.5 166 L383 184 L370 184 L369.5 166 L372 160 L372 150 Z" fill="#cbc7bc" stroke="#6f6d66" stroke-width="0.6"/><rect x="374" y="149" width="1" height="16" fill="#5f5d55"/><rect x="378" y="149" width="1" height="16" fill="#5f5d55"/><circle cx="376.5" cy="176" r="2" fill="#3a3934"/><rect x="25.6" y="57" width="2.8" height="33" fill="#cfcfcb" stroke="#77776f" stroke-width="0.4"/><rect x="22.5" y="84" width="9" height="7" rx="1.5" fill="#2b2d2e"/><rect x="25.6" y="116" width="2.8" height="62" fill="#c9c9c5" stroke="#77776f" stroke-width="0.4"/><rect x="22.5" y="141" width="9" height="7" rx="1.5" fill="#2b2d2e"/><rect x="135.6" y="57" width="2.8" height="33" fill="#cfcfcb" stroke="#77776f" stroke-width="0.4"/><rect x="132.5" y="84" width="9" height="7" rx="1.5" fill="#2b2d2e"/><rect x="135.6" y="116" width="2.8" height="62" fill="#c9c9c5" stroke="#77776f" stroke-width="0.4"/><rect x="132.5" y="141" width="9" height="7" rx="1.5" fill="#2b2d2e"/><rect x="214.6" y="57" width="2.8" height="33" fill="#cfcfcb" stroke="#77776f" stroke-width="0.4"/><rect x="211.5" y="84" width="9" height="7" rx="1.5" fill="#2b2d2e"/><rect x="214.6" y="116" width="2.8" height="62" fill="#c9c9c5" stroke="#77776f" stroke-width="0.4"/><rect x="211.5" y="141" width="9" height="7" rx="1.5" fill="#2b2d2e"/><rect x="355.6" y="57" width="2.8" height="33" fill="#cfcfcb" stroke="#77776f" stroke-width="0.4"/><rect x="352.5" y="84" width="9" height="7" rx="1.5" fill="#2b2d2e"/><rect x="355.6" y="116" width="2.8" height="62" fill="#c9c9c5" stroke="#77776f" stroke-width="0.4"/><rect x="352.5" y="141" width="9" height="7" rx="1.5" fill="#2b2d2e"/></svg>
<div class="t" style="left:285.3px;top:406.5px;font-size:15.9px;color:#8c8c8c;font-weight:700;">Trigger Settings :</div>
<div class="t" style="left:285.3px;top:434.2px;font-size:16.1px;color:#1f1f1f;font-weight:400;">Manual HMI Trigger Mode</div>
<div class="t" style="left:285.3px;top:461.1px;font-size:15.9px;color:#8c8c8c;font-weight:700;">Exposure (ms) :</div>
<div class="t" style="left:357.0px;width:300px;text-align:right;top:461.0px;font-size:16.1px;color:#1f1f1f;font-weight:400;">5ms</div>
<div class="t" style="left:285.3px;top:495.9px;font-size:15.9px;color:#8c8c8c;font-weight:700;">Gain :</div>
<div class="t" style="left:357.0px;width:300px;text-align:right;top:495.8px;font-size:16.1px;color:#1f1f1f;font-weight:400;">1</div>
<div class="t" style="left:285.3px;top:530.7px;font-size:15.9px;color:#8c8c8c;font-weight:700;">Gamma :</div>
<div class="t" style="left:357.0px;width:300px;text-align:right;top:530.6px;font-size:16.1px;color:#1f1f1f;font-weight:400;">50</div>
<div style="position:absolute;left:273px;top:671px;width:395px;height:1px;background:#f0f0f0"></div>
<div class="t" style="left:414.7px;top:687.2px;font-size:16.1px;color:#722ed1;font-weight:400;">Configure Imaging</div>
<div style="position:absolute;left:682px;top:102px;width:807px;height:617px;background:#fff;border:1px solid #ececec;border-radius:6px;box-sizing:border-box"></div>
<div class="t" style="left:709.5px;top:125.8px;font-size:18.1px;color:#141414;font-weight:400;">AI Blocks</div>
<div style="position:absolute;left:683px;top:166px;width:805px;height:1px;background:#f0f0f0"></div>
<div style="position:absolute;left:694px;top:192px;width:112px;height:112px;background:#fff;border:1px solid #e3dff7;border-radius:9px;box-sizing:border-box"></div>
<div style="position:absolute;left:824px;top:196.5px;width:16px;height:16px;background:#008000;border-radius:50%"></div>
<div class="t" style="left:851.2px;top:197.5px;font-size:17.9px;color:#141414;font-weight:700;">Template Image and Alignment</div>
<div class="t" style="left:824.6px;top:227.6px;font-size:16.4px;color:#8c8c8c;font-weight:400;">Use it to track the orientation of an object in an image. The tool can</div>
<div class="t" style="left:824.6px;top:252.4px;font-size:16.4px;color:#8c8c8c;font-weight:400;">track the object regardless of where it is on the image even if its</div>
<div class="t" style="left:824.6px;top:277.1px;font-size:16.4px;color:#8c8c8c;font-weight:400;">rotated.</div>
<div style="position:absolute;left:1380px;top:231px;width:88px;height:35px;background:#fff;border:1px solid #d9d9d9;border-radius:7px;box-sizing:border-box"></div>
<div class="t" style="left:1423.3px;top:240.9px;font-size:15.4px;color:#1f1f1f;font-weight:400;">Edit</div>
<div style="position:absolute;left:694px;top:318px;width:783px;height:1px;background:#f0f0f0"></div>
<div style="position:absolute;left:694px;top:333px;width:112px;height:112px;background:#fff;border:1px solid #e3dff7;border-radius:9px;box-sizing:border-box"></div>
<div style="position:absolute;left:824px;top:337.5px;width:16px;height:16px;background:#fa9c14;border-radius:50%"></div>
<div class="t" style="left:851.2px;top:338.5px;font-size:17.9px;color:#141414;font-weight:700;">Inspection Setup</div>
<div class="t" style="left:824.6px;top:368.6px;font-size:16.4px;color:#8c8c8c;font-weight:400;">Use it to define parts of the image that you want to focus on and</div>
<div class="t" style="left:824.6px;top:393.4px;font-size:16.4px;color:#8c8c8c;font-weight:400;">make decisions.</div>
<div style="position:absolute;left:1380px;top:372px;width:88px;height:35px;background:#fff;border:1px solid #d9d9d9;border-radius:7px;box-sizing:border-box"></div>
<div class="t" style="left:1423.3px;top:381.9px;font-size:15.4px;color:#1f1f1f;font-weight:400;">Edit</div>
<div style="position:absolute;left:694px;top:459px;width:783px;height:1px;background:#f0f0f0"></div>
<div style="position:absolute;left:694px;top:474px;width:112px;height:112px;background:#fff;border:1px solid #e3dff7;border-radius:9px;box-sizing:border-box"></div>
<div style="position:absolute;left:824px;top:478.5px;width:16px;height:16px;background:#fa9c14;border-radius:50%"></div>
<div class="t" style="left:851.2px;top:479.5px;font-size:17.9px;color:#141414;font-weight:700;">Label And Train</div>
<div class="t" style="left:824.6px;top:509.6px;font-size:16.4px;color:#8c8c8c;font-weight:400;">Use it to segment classes at a pixel-level based on labeled defects.</div>
<div class="t" style="left:824.6px;top:534.4px;font-size:16.4px;color:#8c8c8c;font-weight:400;">By operating at a pixel-level, this tool is useful for inspections that</div>
<div class="t" style="left:824.6px;top:559.1px;font-size:16.4px;color:#8c8c8c;font-weight:400;">need finer grained control over labels.</div>
<div style="position:absolute;left:1380px;top:513px;width:88px;height:35px;background:#fff;border:1px solid #d9d9d9;border-radius:7px;box-sizing:border-box"></div>
<div class="t" style="left:1423.3px;top:522.9px;font-size:15.4px;color:#1f1f1f;font-weight:400;">Edit</div>
<svg style="position:absolute;left:694px;top:192px" width="112" height="112" viewBox="0 0 112 112"><rect x="46" y="15" width="51" height="50" fill="#e1e0f6"/><g fill="none" stroke="#9d95f0" stroke-width="2.4"><path d="M46.5 30 V15.5 H68.5"/><path d="M84.4 15.5 H96.5 V24.7"/><path d="M96.5 40.6 V61.5"/><path d="M46.5 45.7 V65.4"/><path d="M63.5 65 H78.7"/><path d="M14.6 58.4 V47.6 H37.4"/><path d="M14.6 74.2 V95.8"/><path d="M29.2 96.6 H51.4"/><path d="M64.1 73 V94.5"/></g><g fill="none" stroke="#4426d6" stroke-width="2.5"><path d="M64 41 H78.6 M71.3 33.6 V48.4"/><path d="M33 72.7 H47.8 M40.4 65.3 V80.1"/><path d="M58.4 89.2 Q82 87 84.3 66" stroke-width="4"/></g><path d="M85 57 L92.5 68.8 L76.8 68.8 Z" fill="#4426d6"/></svg>
<svg style="position:absolute;left:694px;top:333px" width="112" height="112" viewBox="0 0 112 112"><g fill="none" stroke="#9d95f0" stroke-width="2.3"><path d="M16.5 27 V17 H26.8"/><path d="M46 17 H65"/><path d="M84.3 17 H94.6 V27"/><path d="M16.5 46.5 V65.3"/><path d="M94.6 46.5 V65.3"/><path d="M16.5 85.2 V95 H26.8"/><path d="M46 95 H65"/></g><g fill="none" stroke="#4426d6" stroke-width="2.5"><circle cx="75.8" cy="76.3" r="11.3"/><path d="M84 84.5 L92 92.3" stroke-linecap="round"/></g></svg>
<svg style="position:absolute;left:694.4px;top:474px" width="112" height="112" viewBox="0 0 112 112"><path d="M17 61 V17.5 H94.2 V61" fill="none" stroke="#9d95f0" stroke-width="2.5" transform="translate(0,0)"/><path d="M17 17.5 V94.2 H63" fill="none" stroke="#9d95f0" stroke-width="2.5"/><path d="M46 33 Q47 27 55 25 Q62 22.5 70 23.5 Q79 24.5 80.7 32 Q81 36 78 39 Q75 47 70 52 Q66 57 62 55 Q58 52 59 46 Q58 42 57 40 Q55 38 54 41 Q53 46 51 45 Q48 43 48 38 Q45 36 46 33Z" fill="#6a52e8"/><path d="M19.6 83.5 L22 81.5 Q24 80 24.5 76 Q25 70 27 64 Q29 58 34 56 Q37 54 38 50 Q41 48.5 44 50 Q46 53 46 58 Q46.5 64 49 69 Q51 72 52 68 Q53 63 54.5 61 Q56 64 57 70 Q58 74 60.5 76 Q62 78 61.5 83.5 Z" fill="#8b78ee"/><g fill="none" stroke="#4426d6" stroke-width="2.2" stroke-linejoin="round"><path d="M65.5 64.5 Q68 63 70 65 L78 74.5 L75 77 L66.5 68.5 Q64 66.5 65.5 64.5Z"/><path d="M76.5 76 Q82 74 86 80 Q88 85 92.5 89.5 Q86 91 81.5 89 Q75 86 75 80 Q75 78 76.5 76Z"/></g></svg>
<div style="position:absolute;left:1502px;top:102px;width:397px;height:420px;background:#fff;border:1px solid #ececec;border-radius:6px;box-sizing:border-box"></div>
<div class="t" style="left:1529.6px;top:125.5px;font-size:18.1px;color:#141414;font-weight:400;">IO Block</div>
<div style="position:absolute;left:1503px;top:167px;width:395px;height:1px;background:#f0f0f0"></div>
<div class="t" style="left:1556.3px;top:204.3px;font-size:17.6px;color:#141414;font-weight:700;">All Output Nodes</div>
<div style="position:absolute;left:1529px;top:234px;width:342px;height:1px;background:#f0f0f0"></div>
<div class="t" style="left:1548.1px;top:248.5px;font-size:15.8px;color:#262626;font-weight:400;">Write PLC User Data</div>
<div style="position:absolute;left:1503px;top:475px;width:395px;height:1px;background:#f0f0f0"></div>
<div class="t" style="left:1665.4px;top:490.8px;font-size:15.8px;color:#722ed1;font-weight:400;">Configure IO</div>
<div style="position:absolute;left:1502px;top:535px;width:397px;height:184px;background:#fff;border:1px solid #ececec;border-radius:6px;box-sizing:border-box"></div>
<div class="t" style="left:1529.9px;top:559.7px;font-size:16.6px;color:#141414;font-weight:400;">FTP</div>
<div style="position:absolute;left:1786px;top:555px;width:80px;height:26px;background:#fafafa;border:1px solid #d9d9d9;border-radius:5px;box-sizing:border-box"></div>
<div class="t" style="left:1796.4px;top:560.7px;font-size:15.4px;color:#1f1f1f;font-weight:400;">Disabled</div>
<div style="position:absolute;left:1503px;top:599px;width:395px;height:1px;background:#f0f0f0"></div>
<div class="t" style="left:1514.2px;top:615.8px;font-size:16.44px;color:#262626;font-weight:400;">Configure the FTP settings to transfer captured or</div>
<div class="t" style="left:1514.2px;top:640.5px;font-size:16.44px;color:#262626;font-weight:400;">triggered images to a remote server.</div>
<div style="position:absolute;left:1503px;top:672px;width:395px;height:1px;background:#f0f0f0"></div>
<div class="t" style="left:1661.3px;top:689.1px;font-size:15.84px;color:#722ed1;font-weight:400;">Configure FTP</div>
<div style="position:absolute;left:1848px;top:1004px;width:45px;height:45px;background:#722ed1;border-radius:50%;box-shadow:0 6px 16px rgba(0,0,0,0.08),0 3px 6px -4px rgba(0,0,0,0.12)"></div>
<svg style="position:absolute;left:1859px;top:1015px" width="23" height="23" viewBox="0 0 24 24"><g fill="none" stroke="#fff" stroke-width="1.8" stroke-linecap="round"><circle cx="12" cy="12" r="9.6"/><path d="M9.2 9.4 Q9.2 6.6 12 6.6 Q14.8 6.6 14.8 9.2 Q14.8 10.9 13 11.8 Q12 12.4 12 14"/></g><circle cx="12" cy="17.2" r="1.1" fill="#fff"/></svg>
<svg style="position:absolute;left:0;top:0;overflow:visible" width="1920" height="1103" viewBox="0 0 1920 1103"><g fill="none" stroke="#e4e9f2" stroke-width="1.5"><rect x="31.6" y="66.8" width="11.1" height="14.5" rx="1.2"/><path d="M31.6 71.4 H42.7 M31.6 76.5 H42.7"/></g><g fill="#e4e9f2"><rect x="33.3" y="68.6" width="1.3" height="1.2"/><rect x="33.3" y="73.5" width="1.3" height="1.2"/><rect x="33.3" y="78.4" width="1.3" height="1.2"/></g><polygon points="39.98,116.90 42.06,118.98 34.94,126.02 32.46,126.50 32.94,124.02" fill="none" stroke="#fbe8ff" stroke-width="1.6" stroke-linejoin="round"/><line x1="29.58" y1="129.78" x2="43.50" y2="129.78" stroke="#fbe8ff" stroke-width="1.6"/><g fill="none" stroke="#aab6c8" stroke-width="1.5" stroke-linejoin="round"><rect x="29.7" y="167.6" width="11.4" height="11.3" rx="2"/><path d="M41.1 171.6 L44.4 170 V176.5 L41.1 174.9 Z"/><rect x="29.7" y="216.7" width="14.8" height="11.5" rx="1.5"/><path d="M34.6 216.7 V228.2 M39.6 216.7 V228.2 M29.7 220.5 H44.5 M29.7 224.4 H44.5"/><circle cx="35.3" cy="270.3" r="4.7"/><path d="M38.8 273.8 L43.3 278.3" stroke-linecap="round"/><path d="M36 318 H42.5"/><path d="M31.3 322.8 H45 M36.8 322.8 V325.6 Q36.8 327.1 38.3 327.1 H45"/><path d="M42.2 367.3 A6.6 6.6 0 1 0 42.2 374.9"/><path d="M36.6 371.1 H42.5"/><circle cx="37.05" cy="417.8" r="3.7"/><path d="M30.9 427.6 A6.3 6.3 0 0 1 43.3 427.6" stroke-linecap="round"/><path d="M42.50 469.80 L42.49 470.15 L42.45 470.49 L42.54 470.86 L43.19 471.40 L43.79 472.04 L43.76 472.52 L43.57 472.94 L43.35 473.35 L43.10 473.74 L42.83 474.12 L42.43 474.39 L41.58 474.18 L40.79 473.89 L40.43 474.00 L40.14 474.21 L39.85 474.39 L39.54 474.55 L39.23 474.70 L38.95 474.95 L38.80 475.79 L38.56 476.62 L38.13 476.84 L37.66 476.88 L37.20 476.90 L36.74 476.88 L36.27 476.84 L35.84 476.62 L35.60 475.79 L35.45 474.95 L35.17 474.70 L34.86 474.55 L34.55 474.39 L34.26 474.21 L33.97 474.00 L33.61 473.89 L32.82 474.18 L31.97 474.39 L31.57 474.12 L31.30 473.74 L31.05 473.35 L30.83 472.94 L30.64 472.52 L30.61 472.04 L31.21 471.40 L31.86 470.86 L31.95 470.49 L31.91 470.15 L31.90 469.80 L31.91 469.45 L31.95 469.11 L31.86 468.74 L31.21 468.20 L30.61 467.56 L30.64 467.08 L30.83 466.66 L31.05 466.25 L31.30 465.86 L31.57 465.48 L31.97 465.21 L32.82 465.42 L33.61 465.71 L33.97 465.60 L34.26 465.39 L34.55 465.21 L34.86 465.05 L35.17 464.90 L35.45 464.65 L35.60 463.81 L35.84 462.98 L36.27 462.76 L36.74 462.72 L37.20 462.70 L37.66 462.72 L38.13 462.76 L38.56 462.98 L38.80 463.81 L38.95 464.65 L39.23 464.90 L39.54 465.05 L39.85 465.21 L40.14 465.39 L40.43 465.60 L40.79 465.71 L41.58 465.42 L42.43 465.21 L42.83 465.48 L43.10 465.86 L43.35 466.25 L43.57 466.66 L43.76 467.08 L43.79 467.56 L43.19 468.20 L42.54 468.74 L42.45 469.11 L42.49 469.45 Z"/><circle cx="37.2" cy="469.8" r="2.5"/><path d="M30.5 1027.5 A6.8 6.8 0 0 1 42.4 1021.6"/><path d="M44 1024.5 A6.8 6.8 0 0 1 32 1030.2"/><rect x="31.6" y="1067.9" width="11" height="14.5" rx="1"/><path d="M37.6 1068 V1073.4 L39.2 1072.2 L40.8 1073.4 V1068"/></g><g fill="#aab6c8"><path d="M41.3 315.7 L44.4 318 L41.3 320.3 Z"/><circle cx="31.3" cy="322.8" r="1.5"/><path d="M41.9 368.9 L45 371.1 L41.9 373.3 Z"/><circle cx="33.2" cy="170" r="0.7"/><path d="M40.5 1020.6 L44.2 1019.4 L43.8 1023.6 Z"/><path d="M33.8 1031.2 L30.1 1032.4 L30.5 1028.2 Z"/></g><polygon points="424.60,71.00 427.20,73.60 418.30,82.40 415.20,83.00 415.80,79.90" fill="none" stroke="#722ed1" stroke-width="1.8" stroke-linejoin="round"/><line x1="411.60" y1="87.10" x2="429.00" y2="87.10" stroke="#722ed1" stroke-width="1.8"/><polygon points="581.42,73.81 583.10,75.48 577.37,81.15 575.37,81.54 575.76,79.54" fill="none" stroke="#722ed1" stroke-width="1.5" stroke-linejoin="round"/><line x1="573.05" y1="84.18" x2="584.26" y2="84.18" stroke="#722ed1" stroke-width="1.5"/><polygon points="908.82,73.51 910.50,75.18 904.77,80.85 902.77,81.24 903.16,79.24" fill="none" stroke="#722ed1" stroke-width="1.5" stroke-linejoin="round"/><line x1="900.45" y1="83.88" x2="911.66" y2="83.88" stroke="#722ed1" stroke-width="1.5"/><polygon points="1409.39,242.69 1411.43,244.74 1404.44,251.64 1402.01,252.11 1402.48,249.68" fill="none" stroke="#262626" stroke-width="1.5" stroke-linejoin="round"/><line x1="1399.18" y1="255.33" x2="1412.84" y2="255.33" stroke="#262626" stroke-width="1.5"/><polygon points="1409.39,383.69 1411.43,385.74 1404.44,392.64 1402.01,393.12 1402.48,390.68" fill="none" stroke="#262626" stroke-width="1.5" stroke-linejoin="round"/><line x1="1399.18" y1="396.33" x2="1412.84" y2="396.33" stroke="#262626" stroke-width="1.5"/><polygon points="1409.39,524.70 1411.43,526.74 1404.44,533.64 1402.01,534.12 1402.48,531.68" fill="none" stroke="#262626" stroke-width="1.5" stroke-linejoin="round"/><line x1="1399.18" y1="537.33" x2="1412.84" y2="537.33" stroke="#262626" stroke-width="1.5"/><path d="M406.60 695.10 L406.59 695.45 L406.55 695.79 L406.63 696.16 L407.24 696.69 L407.80 697.31 L407.77 697.78 L407.58 698.20 L407.36 698.60 L407.12 698.99 L406.85 699.36 L406.46 699.63 L405.65 699.45 L404.88 699.19 L404.53 699.30 L404.24 699.51 L403.95 699.69 L403.64 699.85 L403.33 700.00 L403.05 700.25 L402.89 701.04 L402.64 701.83 L402.21 702.04 L401.76 702.09 L401.30 702.10 L400.84 702.09 L400.39 702.04 L399.96 701.83 L399.71 701.04 L399.55 700.25 L399.27 700.00 L398.96 699.85 L398.65 699.69 L398.36 699.51 L398.07 699.30 L397.72 699.19 L396.95 699.45 L396.14 699.63 L395.75 699.36 L395.48 698.99 L395.24 698.60 L395.02 698.20 L394.83 697.78 L394.80 697.31 L395.36 696.69 L395.97 696.16 L396.05 695.79 L396.01 695.45 L396.00 695.10 L396.01 694.75 L396.05 694.41 L395.97 694.04 L395.36 693.51 L394.80 692.89 L394.83 692.42 L395.02 692.00 L395.24 691.60 L395.48 691.21 L395.75 690.84 L396.14 690.57 L396.95 690.75 L397.72 691.01 L398.07 690.90 L398.36 690.69 L398.65 690.51 L398.96 690.35 L399.27 690.20 L399.55 689.95 L399.71 689.16 L399.96 688.37 L400.39 688.16 L400.84 688.11 L401.30 688.10 L401.76 688.11 L402.21 688.16 L402.64 688.37 L402.89 689.16 L403.05 689.95 L403.33 690.20 L403.64 690.35 L403.95 690.51 L404.24 690.69 L404.53 690.90 L404.88 691.01 L405.65 690.75 L406.46 690.57 L406.85 690.84 L407.12 691.21 L407.36 691.60 L407.58 692.00 L407.77 692.42 L407.80 692.89 L407.24 693.51 L406.63 694.04 L406.55 694.41 L406.59 694.75 Z" fill="none" stroke="#722ed1" stroke-width="1.4" stroke-linejoin="round"/><circle cx="401.3" cy="695.1" r="2.5" fill="none" stroke="#722ed1" stroke-width="1.4"/><path d="M1657.80 498.30 L1657.79 498.65 L1657.75 498.99 L1657.83 499.36 L1658.44 499.89 L1659.00 500.51 L1658.97 500.98 L1658.78 501.40 L1658.56 501.80 L1658.32 502.19 L1658.05 502.56 L1657.66 502.83 L1656.85 502.65 L1656.08 502.39 L1655.73 502.50 L1655.44 502.71 L1655.15 502.89 L1654.84 503.05 L1654.53 503.20 L1654.25 503.45 L1654.09 504.24 L1653.84 505.03 L1653.41 505.24 L1652.96 505.29 L1652.50 505.30 L1652.04 505.29 L1651.59 505.24 L1651.16 505.03 L1650.91 504.24 L1650.75 503.45 L1650.47 503.20 L1650.16 503.05 L1649.85 502.89 L1649.56 502.71 L1649.27 502.50 L1648.92 502.39 L1648.15 502.65 L1647.34 502.83 L1646.95 502.56 L1646.68 502.19 L1646.44 501.80 L1646.22 501.40 L1646.03 500.98 L1646.00 500.51 L1646.56 499.89 L1647.17 499.36 L1647.25 498.99 L1647.21 498.65 L1647.20 498.30 L1647.21 497.95 L1647.25 497.61 L1647.17 497.24 L1646.56 496.71 L1646.00 496.09 L1646.03 495.62 L1646.22 495.20 L1646.44 494.80 L1646.68 494.41 L1646.95 494.04 L1647.34 493.77 L1648.15 493.95 L1648.92 494.21 L1649.27 494.10 L1649.56 493.89 L1649.85 493.71 L1650.16 493.55 L1650.47 493.40 L1650.75 493.15 L1650.91 492.36 L1651.16 491.57 L1651.59 491.36 L1652.04 491.31 L1652.50 491.30 L1652.96 491.31 L1653.41 491.36 L1653.84 491.57 L1654.09 492.36 L1654.25 493.15 L1654.53 493.40 L1654.84 493.55 L1655.15 493.71 L1655.44 493.89 L1655.73 494.10 L1656.08 494.21 L1656.85 493.95 L1657.66 493.77 L1658.05 494.04 L1658.32 494.41 L1658.56 494.80 L1658.78 495.20 L1658.97 495.62 L1659.00 496.09 L1658.44 496.71 L1657.83 497.24 L1657.75 497.61 L1657.79 497.95 Z" fill="none" stroke="#722ed1" stroke-width="1.4" stroke-linejoin="round"/><circle cx="1652.5" cy="498.3" r="2.5" fill="none" stroke="#722ed1" stroke-width="1.4"/><path d="M1649.30 696.50 L1649.29 696.85 L1649.25 697.19 L1649.33 697.56 L1649.94 698.09 L1650.50 698.71 L1650.47 699.18 L1650.28 699.60 L1650.06 700.00 L1649.82 700.39 L1649.55 700.76 L1649.16 701.03 L1648.35 700.85 L1647.58 700.59 L1647.23 700.70 L1646.94 700.91 L1646.65 701.09 L1646.34 701.25 L1646.03 701.40 L1645.75 701.65 L1645.59 702.44 L1645.34 703.23 L1644.91 703.44 L1644.46 703.49 L1644.00 703.50 L1643.54 703.49 L1643.09 703.44 L1642.66 703.23 L1642.41 702.44 L1642.25 701.65 L1641.97 701.40 L1641.66 701.25 L1641.35 701.09 L1641.06 700.91 L1640.77 700.70 L1640.42 700.59 L1639.65 700.85 L1638.84 701.03 L1638.45 700.76 L1638.18 700.39 L1637.94 700.00 L1637.72 699.60 L1637.53 699.18 L1637.50 698.71 L1638.06 698.09 L1638.67 697.56 L1638.75 697.19 L1638.71 696.85 L1638.70 696.50 L1638.71 696.15 L1638.75 695.81 L1638.67 695.44 L1638.06 694.91 L1637.50 694.29 L1637.53 693.82 L1637.72 693.40 L1637.94 693.00 L1638.18 692.61 L1638.45 692.24 L1638.84 691.97 L1639.65 692.15 L1640.42 692.41 L1640.77 692.30 L1641.06 692.09 L1641.35 691.91 L1641.66 691.75 L1641.97 691.60 L1642.25 691.35 L1642.41 690.56 L1642.66 689.77 L1643.09 689.56 L1643.54 689.51 L1644.00 689.50 L1644.46 689.51 L1644.91 689.56 L1645.34 689.77 L1645.59 690.56 L1645.75 691.35 L1646.03 691.60 L1646.34 691.75 L1646.65 691.91 L1646.94 692.09 L1647.23 692.30 L1647.58 692.41 L1648.35 692.15 L1649.16 691.97 L1649.55 692.24 L1649.82 692.61 L1650.06 693.00 L1650.28 693.40 L1650.47 693.82 L1650.50 694.29 L1649.94 694.91 L1649.33 695.44 L1649.25 695.81 L1649.29 696.15 Z" fill="none" stroke="#722ed1" stroke-width="1.4" stroke-linejoin="round"/><circle cx="1644.0" cy="696.5" r="2.5" fill="none" stroke="#722ed1" stroke-width="1.4"/><g fill="none" stroke="#9e9e9e" stroke-width="1.3"><path d="M1544.3 207.3 A7.8 7.8 0 1 0 1544.3 217.5"/><path d="M1538.2 212.4 H1544.5"/></g><path d="M1543.8 209.8 L1547.3 212.4 L1543.8 215 Z" fill="#9e9e9e"/></svg>
<svg style="position:absolute;left:1890px;top:1073px" width="30" height="30" viewBox="0 0 30 30"><path d="M30 14 A16 16 0 0 1 14 30 H30 Z" fill="#4a1408"/><path d="M30 14 A16 16 0 0 1 14 30" fill="none" stroke="#ffffff" stroke-width="1"/></svg>
<svg style="position:absolute;left:0px;top:1088px" width="15" height="15" viewBox="0 0 15 15"><path d="M0 7 A8 8 0 0 0 8 15 H0 Z" fill="#000000"/><path d="M0 7 A8 8 0 0 0 8 15" fill="none" stroke="#3d5066" stroke-width="0.8"/></svg>
</body></html>
